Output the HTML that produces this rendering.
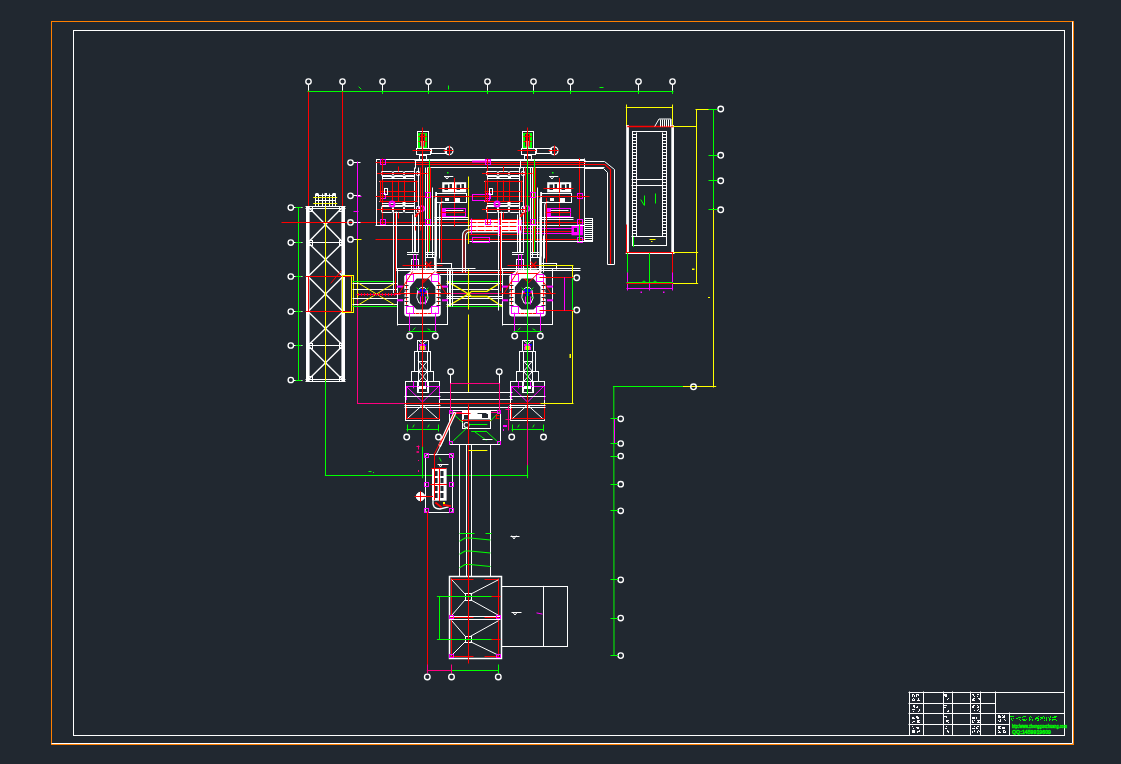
<!DOCTYPE html><html><head><meta charset="utf-8"><style>html,body{margin:0;padding:0;background:#212830;overflow:hidden}svg{display:block}</style></head><body>
<svg width="1121" height="764" viewBox="0 0 1121 764" stroke-linecap="square">
<rect width="1121" height="764" fill="#212830"/>
<defs><g id="unit">
<rect x="417.5" y="131.5" width="11" height="17" fill="none" stroke="#ffffff" stroke-width="1"/>
<rect x="418.5" y="133.5" width="8" height="14" fill="none" stroke="#00ff00" stroke-width="1"/>
<line x1="419.5" y1="134" x2="419.5" y2="147" stroke="#00ff00" stroke-width="1"/>
<line x1="425.5" y1="134" x2="425.5" y2="147" stroke="#00ff00" stroke-width="1"/>
<line x1="421.5" y1="134" x2="421.5" y2="146" stroke="#ff0000" stroke-width="1"/>
<line x1="424.5" y1="134" x2="424.5" y2="146" stroke="#ff0000" stroke-width="1"/>
<rect x="418" y="146.5" width="9" height="2" fill="#00ff00"/>
<line x1="419" y1="136.5" x2="426" y2="136.5" stroke="#ff0000" stroke-width="1"/>
<line x1="419" y1="141.5" x2="426" y2="141.5" stroke="#ff0000" stroke-width="1"/>
<rect x="421.5" y="141" width="2" height="7" fill="#ffffff"/>
<rect x="416.5" y="148.5" width="14" height="6" fill="none" stroke="#ffffff" stroke-width="1"/>
<line x1="413" y1="150.5" x2="432" y2="150.5" stroke="#ff0000" stroke-width="1"/>
<rect x="431.5" y="148.5" width="15" height="5" fill="none" stroke="#ffffff" stroke-width="1"/>
<circle cx="449" cy="150.7" r="3.9" fill="none" stroke="#ffffff" stroke-width="1.3"/>
<line x1="444" y1="150.5" x2="453" y2="150.5" stroke="#ff0000" stroke-width="1"/>
<line x1="449.5" y1="146" x2="449.5" y2="155" stroke="#ff0000" stroke-width="1"/>
<rect x="419.5" y="155.5" width="7" height="4" fill="none" stroke="#ffffff" stroke-width="1"/>
<line x1="415.5" y1="161" x2="415.5" y2="168.2" stroke="#ffffff" stroke-width="1"/>
<line x1="414.5" y1="168" x2="414.5" y2="252.5" stroke="#ffffff" stroke-width="1"/>
<line x1="418.5" y1="168" x2="418.5" y2="252.5" stroke="#ffffff" stroke-width="1"/>
<line x1="412.5" y1="215" x2="412.5" y2="252.5" stroke="#ffffff" stroke-width="1"/>
<line x1="415.5" y1="215" x2="415.5" y2="252.5" stroke="#ffffff" stroke-width="1"/>
<line x1="425.5" y1="168" x2="425.5" y2="257" stroke="#ffffff" stroke-width="1"/>
<line x1="427.5" y1="168" x2="427.5" y2="257" stroke="#ffffff" stroke-width="1"/>
<line x1="432.5" y1="188" x2="432.5" y2="256.5" stroke="#ffffff" stroke-width="1"/>
<rect x="435.2" y="192" width="1.8" height="64.5" fill="#ffffff"/>
<circle cx="421.7" cy="208.6" r="2.6" fill="none" stroke="#ff00ff" stroke-width="1.5"/>
<line x1="416" y1="216" x2="419" y2="212" stroke="#ff0000" stroke-width="2"/>
<line x1="439.5" y1="226" x2="439.5" y2="258" stroke="#ffffff" stroke-width="1"/>
<line x1="441.5" y1="227" x2="441.5" y2="262" stroke="#ff0000" stroke-width="1"/>
<line x1="415.5" y1="226" x2="415.5" y2="230" stroke="#ff0000" stroke-width="1"/>
<line x1="420.5" y1="168" x2="420.5" y2="230" stroke="#ff0000" stroke-width="1"/>
<line x1="429.5" y1="160" x2="429.5" y2="252" stroke="#00ff00" stroke-width="1"/>
<line x1="428.5" y1="168" x2="428.5" y2="252" stroke="#ff0000" stroke-width="1"/>
<line x1="430.5" y1="168" x2="430.5" y2="240" stroke="#ff0000" stroke-width="1"/>
<line x1="407.5" y1="252.5" x2="418" y2="252.5" stroke="#ffffff" stroke-width="1"/>
<line x1="407.5" y1="254.5" x2="418" y2="254.5" stroke="#ffffff" stroke-width="1"/>
<line x1="426" y1="252.5" x2="434" y2="252.5" stroke="#ffffff" stroke-width="1"/>
<line x1="426" y1="254.5" x2="434" y2="254.5" stroke="#ffffff" stroke-width="1"/>
<rect x="411.5" y="259.5" width="7" height="11" fill="none" stroke="#ffffff" stroke-width="1"/>
<line x1="413.5" y1="255" x2="413.5" y2="270" stroke="#ff00ff" stroke-width="1"/>
<line x1="416.5" y1="255" x2="416.5" y2="270" stroke="#ff00ff" stroke-width="1"/>
<rect x="425.5" y="257.5" width="9" height="13" fill="none" stroke="#ffffff" stroke-width="1"/>
<path d="M426,262 L431,268 M431,262 L426,268" fill="none" stroke="#ff0000" stroke-width="1.2"/>
<line x1="403" y1="265.5" x2="442" y2="265.5" stroke="#ff0000" stroke-width="1"/>
<line x1="437" y1="263.5" x2="451.6" y2="263.5" stroke="#ffffff" stroke-width="1"/>
<line x1="451.5" y1="263.7" x2="451.5" y2="269" stroke="#ffffff" stroke-width="1"/>
<line x1="396.6" y1="268.5" x2="475" y2="268.5" stroke="#ffffff" stroke-width="1"/>
<line x1="396.6" y1="270.5" x2="475" y2="270.5" stroke="#ffffff" stroke-width="1"/>
<line x1="393.5" y1="212" x2="393.5" y2="269" stroke="#ffffff" stroke-width="1"/>
<line x1="396.5" y1="212" x2="396.5" y2="269" stroke="#ffffff" stroke-width="1"/>
<line x1="395.5" y1="212" x2="395.5" y2="269" stroke="#ff0000" stroke-width="1"/>
<line x1="376" y1="225.5" x2="468" y2="225.5" stroke="#ffffff" stroke-width="1"/>
<rect x="425.5" y="192.5" width="5" height="5" fill="none" stroke="#ff00ff" stroke-width="1"/>
<rect x="425.5" y="219.5" width="5" height="5" fill="none" stroke="#ff00ff" stroke-width="1"/>
<rect x="380.5" y="159.5" width="5" height="5" fill="none" stroke="#ff00ff" stroke-width="1"/>
<rect x="380.5" y="193.5" width="5" height="5" fill="none" stroke="#ff00ff" stroke-width="1"/>
<rect x="380.5" y="219.5" width="5" height="5" fill="none" stroke="#ff00ff" stroke-width="1"/>
<line x1="382.5" y1="159" x2="382.5" y2="224" stroke="#ff0000" stroke-width="1"/>
<rect x="381.5" y="171.5" width="11" height="4" fill="none" stroke="#ffffff" stroke-width="1" rx="0.8"/>
<rect x="381.5" y="206.5" width="11" height="6" fill="none" stroke="#ffffff" stroke-width="1" rx="0.8"/>
<rect x="393.5" y="171.5" width="10" height="4" fill="none" stroke="#ffffff" stroke-width="1" rx="0.8"/>
<rect x="393.5" y="206.5" width="10" height="6" fill="none" stroke="#ffffff" stroke-width="1" rx="0.8"/>
<rect x="404.5" y="171.5" width="10" height="4" fill="none" stroke="#ffffff" stroke-width="1" rx="0.8"/>
<rect x="404.5" y="206.5" width="10" height="6" fill="none" stroke="#ffffff" stroke-width="1" rx="0.8"/>
<rect x="416.5" y="171.5" width="3" height="4" fill="none" stroke="#ffffff" stroke-width="1" rx="0.8"/>
<rect x="416.5" y="206.5" width="3" height="6" fill="none" stroke="#ffffff" stroke-width="1" rx="0.8"/>
<line x1="377.5" y1="173.5" x2="427" y2="173.5" stroke="#ff0000" stroke-width="1"/>
<line x1="377.5" y1="209.5" x2="420" y2="209.5" stroke="#ff0000" stroke-width="1"/>
<line x1="382.5" y1="176.5" x2="414" y2="176.5" stroke="#ffffff" stroke-width="1"/>
<line x1="382.5" y1="178.5" x2="414" y2="178.5" stroke="#ffffff" stroke-width="1"/>
<line x1="382.5" y1="176" x2="382.5" y2="179" stroke="#ffffff" stroke-width="1"/>
<line x1="414.5" y1="176" x2="414.5" y2="179" stroke="#ffffff" stroke-width="1"/>
<rect x="391.5" y="177" width="3" height="2" fill="#ffffff"/>
<rect x="403" y="177" width="3" height="2" fill="#ffffff"/>
<line x1="379.5" y1="181.5" x2="417" y2="181.5" stroke="#ffffff" stroke-width="1"/>
<line x1="379.5" y1="201.5" x2="417" y2="201.5" stroke="#ffffff" stroke-width="1"/>
<line x1="382.5" y1="203.5" x2="414" y2="203.5" stroke="#ffffff" stroke-width="1"/>
<line x1="382.5" y1="205.5" x2="414" y2="205.5" stroke="#ffffff" stroke-width="1"/>
<rect x="402.5" y="202" width="3" height="4" fill="#ffffff"/>
<line x1="380.5" y1="181" x2="380.5" y2="201" stroke="#ff0000" stroke-width="1"/>
<line x1="382.5" y1="181" x2="382.5" y2="201" stroke="#ff0000" stroke-width="1"/>
<line x1="392.5" y1="181" x2="392.5" y2="201" stroke="#ff0000" stroke-width="1"/>
<line x1="398.5" y1="181" x2="398.5" y2="201" stroke="#ff0000" stroke-width="1"/>
<line x1="404.5" y1="181" x2="404.5" y2="201" stroke="#ff0000" stroke-width="1"/>
<line x1="416.5" y1="181" x2="416.5" y2="201" stroke="#ff0000" stroke-width="1"/>
<line x1="398.5" y1="167" x2="398.5" y2="171" stroke="#ff0000" stroke-width="1"/>
<line x1="398.5" y1="213" x2="398.5" y2="218" stroke="#ff0000" stroke-width="1"/>
<line x1="380" y1="181.5" x2="417" y2="181.5" stroke="#ff0000" stroke-width="1"/>
<line x1="380" y1="191.5" x2="417" y2="191.5" stroke="#ff0000" stroke-width="1"/>
<line x1="380" y1="201.5" x2="417" y2="201.5" stroke="#ff0000" stroke-width="1"/>
<rect x="384.5" y="188.5" width="3" height="6" fill="none" stroke="#ffffff" stroke-width="1"/>
<circle cx="392" cy="204" r="2.5" fill="none" stroke="#ff00ff" stroke-width="2"/>
<rect x="442.2" y="182.2" width="24" height="10.1" fill="#ffffff"/>
<rect x="444.5" y="184.5" width="3.5" height="5.5" fill="#212830"/>
<rect x="449.5" y="184" width="2.5" height="5" fill="#212830"/>
<rect x="456.5" y="184.5" width="3.5" height="5.5" fill="#212830"/>
<rect x="461.5" y="184" width="2.5" height="5" fill="#212830"/>
<line x1="439" y1="188.5" x2="468" y2="188.5" stroke="#ff0000" stroke-width="1"/>
<line x1="454.5" y1="178.4" x2="454.5" y2="226.2" stroke="#ff0000" stroke-width="1"/>
<line x1="444.5" y1="176.5" x2="452.8" y2="176.5" stroke="#ffffff" stroke-width="1"/>
<path d="M445,176.5 L447,179 L449,176.5" fill="none" stroke="#ffffff" stroke-width="1"/>
<rect x="447" y="172" width="1.5" height="1.5" fill="#00ff00"/>
<rect x="436.5" y="193.5" width="30" height="9" fill="none" stroke="#ffffff" stroke-width="1"/>
<line x1="436" y1="196.5" x2="467" y2="196.5" stroke="#ff0000" stroke-width="1"/>
<rect x="445" y="198" width="4" height="3" fill="#ffffff"/>
<rect x="455" y="198" width="5" height="4" fill="#ffffff"/>
<rect x="441.5" y="208.5" width="24" height="8" fill="none" stroke="#ff00ff" stroke-width="1"/>
<rect x="441.5" y="209" width="4.5" height="7" fill="#ff00ff"/>
<line x1="441" y1="212.5" x2="465" y2="212.5" stroke="#ff0000" stroke-width="1"/>
<line x1="446" y1="210.5" x2="463" y2="210.5" stroke="#ffffff" stroke-width="1"/>
<line x1="435" y1="217.5" x2="468" y2="217.5" stroke="#ffffff" stroke-width="1"/>
<line x1="435" y1="219.5" x2="468" y2="219.5" stroke="#ffffff" stroke-width="1"/>
<rect x="434.5" y="198.4" width="2.2" height="73.6" fill="#ffffff"/>
<line x1="441.5" y1="198.4" x2="441.5" y2="250" stroke="#ff0000" stroke-width="1"/>
<path d="M439.6,226 L439.6,206 Q439.6,202 443,202" fill="none" stroke="#ffffff" stroke-width="1.1"/>
<rect x="397.5" y="268.5" width="50" height="56" fill="none" stroke="#ffffff" stroke-width="1"/>
<path d="M413,269.5 L432,269.5 L440.8,276 L440.8,313 Q440.8,316.5 437.3,316.5 L407.7,316.5 Q404.2,316.5 404.2,313 L404.2,276 Z M416.7,278.5 L428.5,278.5 L435.4,287 L435.4,303 L428.5,309.6 L416.7,309.6 L409.9,303 L409.9,287 Z" fill="#ffffff" fill-rule="evenodd" stroke="none" stroke-width="0"/>
<path d="M406.5,281 L406.5,308 M438.5,281 L438.5,308 M412,313.5 L433,313.5" fill="none" stroke="#ff0000" stroke-width="1" stroke-dasharray="2.5,1.5"/>
<path d="M413,273.5 L432,273.5" fill="none" stroke="#ff0000" stroke-width="1"/>
<path d="M404.8,290 L404.8,300 M440.2,290 L440.2,300" fill="none" stroke="#212830" stroke-width="1.2" stroke-dasharray="1.5,2"/>
<line x1="405" y1="285.5" x2="408" y2="285.5" stroke="#212830" stroke-width="1"/>
<line x1="437" y1="285.5" x2="440" y2="285.5" stroke="#212830" stroke-width="1"/>
<line x1="405" y1="289.5" x2="408" y2="289.5" stroke="#212830" stroke-width="1"/>
<line x1="437" y1="289.5" x2="440" y2="289.5" stroke="#212830" stroke-width="1"/>
<line x1="405" y1="293.5" x2="408" y2="293.5" stroke="#212830" stroke-width="1"/>
<line x1="437" y1="293.5" x2="440" y2="293.5" stroke="#212830" stroke-width="1"/>
<line x1="405" y1="297.5" x2="408" y2="297.5" stroke="#212830" stroke-width="1"/>
<line x1="437" y1="297.5" x2="440" y2="297.5" stroke="#212830" stroke-width="1"/>
<line x1="405" y1="301.5" x2="408" y2="301.5" stroke="#212830" stroke-width="1"/>
<line x1="437" y1="301.5" x2="440" y2="301.5" stroke="#212830" stroke-width="1"/>
<line x1="405" y1="305.5" x2="408" y2="305.5" stroke="#212830" stroke-width="1"/>
<line x1="437" y1="305.5" x2="440" y2="305.5" stroke="#212830" stroke-width="1"/>
<rect x="406.5" y="274.5" width="7" height="7" fill="none" stroke="#ff00ff" stroke-width="1"/>
<rect x="431.5" y="274.5" width="7" height="7" fill="none" stroke="#ff00ff" stroke-width="1"/>
<rect x="406.5" y="306.5" width="7" height="7" fill="none" stroke="#ff00ff" stroke-width="1"/>
<rect x="431.5" y="306.5" width="7" height="7" fill="none" stroke="#ff00ff" stroke-width="1"/>
<line x1="398" y1="286.6" x2="402" y2="286.6" stroke="#ff00ff" stroke-width="2"/>
<line x1="398" y1="300.3" x2="402" y2="300.3" stroke="#ff00ff" stroke-width="2"/>
<line x1="443" y1="286.6" x2="447" y2="286.6" stroke="#ff00ff" stroke-width="2"/>
<line x1="443" y1="300.3" x2="447" y2="300.3" stroke="#ff00ff" stroke-width="2"/>
<line x1="395" y1="293.5" x2="450" y2="293.5" stroke="#ff0000" stroke-width="1"/>
<line x1="398.7" y1="293.9" x2="412.4" y2="271.9" stroke="#ff0000" stroke-width="1"/>
<line x1="423.4" y1="282.9" x2="434.4" y2="271.9" stroke="#ff0000" stroke-width="1"/>
<line x1="439" y1="282.9" x2="446.3" y2="293.9" stroke="#ff0000" stroke-width="1"/>
<path d="M418,290 Q422.5,284 427,290 L428,298 L426,303 L419,303 L417,298 Z" fill="none" stroke="#ffffff" stroke-width="1"/>
<rect x="419.5" y="289" width="2.5" height="3" fill="#0000ff"/>
<rect x="423" y="289" width="2.5" height="3" fill="#0000ff"/>
<rect x="421" y="293" width="3" height="3" fill="#0000ff"/>
<rect x="418" y="291" width="1.5" height="2" fill="#ff00ff"/>
<rect x="425.5" y="291" width="1.5" height="2" fill="#ff00ff"/>
<rect x="422.3" y="287.5" width="1" height="1.5" fill="#ffff00"/>
<line x1="417" y1="288" x2="419" y2="290" stroke="#00ff00" stroke-width="1"/>
<line x1="428" y1="288" x2="426" y2="290" stroke="#00ff00" stroke-width="1"/>
<line x1="426" y1="297" x2="428" y2="298" stroke="#00ff00" stroke-width="1"/>
<line x1="420.5" y1="297" x2="420.5" y2="304" stroke="#ff00ff" stroke-width="1"/>
<line x1="422.5" y1="297" x2="422.5" y2="304" stroke="#ff00ff" stroke-width="1"/>
<line x1="425.5" y1="297" x2="425.5" y2="304" stroke="#ff00ff" stroke-width="1"/>
<line x1="409.5" y1="313" x2="409.5" y2="332" stroke="#ff00ff" stroke-width="1"/>
<line x1="435.5" y1="313" x2="435.5" y2="332" stroke="#ff00ff" stroke-width="1"/>
<line x1="409" y1="331.5" x2="436" y2="331.5" stroke="#00ff00" stroke-width="1"/>
<line x1="413" y1="330" x2="415" y2="328" stroke="#00ff00" stroke-width="1"/>
<line x1="428" y1="329" x2="430" y2="330" stroke="#00ff00" stroke-width="1"/>
<circle cx="409.7" cy="336" r="2.8" fill="none" stroke="#ffffff" stroke-width="1.35"/>
<circle cx="435.3" cy="336" r="2.8" fill="none" stroke="#ffffff" stroke-width="1.35"/>
<rect x="417.5" y="340.5" width="11" height="11" fill="none" stroke="#ffffff" stroke-width="1"/>
<path d="M419,341 L422.7,344 L426.5,341" fill="none" stroke="#ffffff" stroke-width="1"/>
<rect x="419" y="344" width="7" height="2" fill="#ff00ff"/>
<rect x="420" y="346" width="5" height="4" fill="#ffff00" opacity="0.9"/>
<rect x="419" y="346.5" width="1.5" height="3.5" fill="#ff00ff"/>
<rect x="424.5" y="346.5" width="1.5" height="3.5" fill="#ff00ff"/>
<rect x="425" y="344" width="2" height="1.5" fill="#0000ff"/>
<rect x="414.5" y="351.5" width="16" height="20" fill="none" stroke="#ffffff" stroke-width="1"/>
<line x1="418.5" y1="351.5" x2="418.5" y2="391.3" stroke="#ffffff" stroke-width="1"/>
<line x1="427.5" y1="351.5" x2="427.5" y2="391.3" stroke="#ffffff" stroke-width="1"/>
<line x1="418.5" y1="361.5" x2="427.5" y2="361.5" stroke="#ffffff" stroke-width="1"/>
<line x1="418.5" y1="361" x2="427.5" y2="371.4" stroke="#ffffff" stroke-width="1"/>
<line x1="427.5" y1="361" x2="418.5" y2="371.4" stroke="#ffffff" stroke-width="1"/>
<line x1="418.5" y1="371.4" x2="427.5" y2="381.7" stroke="#ffffff" stroke-width="1"/>
<line x1="427.5" y1="371.4" x2="418.5" y2="381.7" stroke="#ffffff" stroke-width="1"/>
<rect x="411.5" y="371.5" width="22" height="10" fill="none" stroke="#ffffff" stroke-width="1"/>
<rect x="405.5" y="381.5" width="34" height="39" fill="none" stroke="#ffffff" stroke-width="1"/>
<line x1="406.5" y1="386.5" x2="439" y2="386.5" stroke="#ff00ff" stroke-width="1"/>
<line x1="406.5" y1="386.5" x2="406.5" y2="399.6" stroke="#ff00ff" stroke-width="1"/>
<line x1="439.5" y1="386.5" x2="439.5" y2="399.6" stroke="#ff00ff" stroke-width="1"/>
<line x1="407" y1="387" x2="422.5" y2="402" stroke="#ff00ff" stroke-width="1"/>
<line x1="438" y1="387" x2="422.5" y2="402" stroke="#ff00ff" stroke-width="1"/>
<line x1="407" y1="418.5" x2="439" y2="418.5" stroke="#ff0000" stroke-width="1"/>
<line x1="406.5" y1="405" x2="406.5" y2="418.8" stroke="#ff0000" stroke-width="1"/>
<line x1="439.5" y1="405" x2="439.5" y2="418.8" stroke="#ff0000" stroke-width="1"/>
<line x1="408" y1="418" x2="422.5" y2="405" stroke="#ffffff" stroke-width="1"/>
<line x1="437" y1="418" x2="422.5" y2="405" stroke="#ffffff" stroke-width="1"/>
<line x1="413.5" y1="381.7" x2="413.5" y2="387.9" stroke="#ff00ff" stroke-width="1"/>
<line x1="428.5" y1="381.7" x2="428.5" y2="387.9" stroke="#ff00ff" stroke-width="1"/>
<line x1="417.5" y1="381.7" x2="417.5" y2="386" stroke="#ff00ff" stroke-width="1"/>
<line x1="425.5" y1="381.7" x2="425.5" y2="386" stroke="#ff00ff" stroke-width="1"/>
<rect x="417.5" y="381.5" width="11" height="11" fill="none" stroke="#ffffff" stroke-width="1"/>
<rect x="419" y="386" width="7" height="3" fill="#ffffff"/>
<line x1="405" y1="396.5" x2="440" y2="396.5" stroke="#ffffff" stroke-width="1"/>
<line x1="405" y1="405.5" x2="440" y2="405.5" stroke="#ffffff" stroke-width="1"/>
<line x1="405" y1="407.5" x2="440" y2="407.5" stroke="#ffffff" stroke-width="1"/>
<line x1="405" y1="403.5" x2="440" y2="403.5" stroke="#ff0000" stroke-width="1"/>
<line x1="407.5" y1="425" x2="407.5" y2="431" stroke="#00ff00" stroke-width="1"/>
<line x1="438.5" y1="425" x2="438.5" y2="431" stroke="#00ff00" stroke-width="1"/>
<line x1="407" y1="429.5" x2="438.5" y2="429.5" stroke="#00ff00" stroke-width="1"/>
<line x1="413" y1="427" x2="414" y2="425" stroke="#00ff00" stroke-width="1"/>
<line x1="428" y1="427" x2="429" y2="425" stroke="#00ff00" stroke-width="1"/>
<circle cx="406.7" cy="437" r="2.8" fill="none" stroke="#ffffff" stroke-width="1.35"/>
<circle cx="438.5" cy="437" r="2.8" fill="none" stroke="#ffffff" stroke-width="1.35"/>
</g><g id="ulow">
</g></defs>
<rect x="51.5" y="21.5" width="1022" height="723" fill="none" stroke="#ff7f00" stroke-width="1"/>
<line x1="1072.5" y1="22" x2="1072.5" y2="743" stroke="#ffffff" stroke-width="1"/>
<line x1="52" y1="743.5" x2="1072" y2="743.5" stroke="#ffffff" stroke-width="1"/>
<rect x="73.5" y="30.5" width="991" height="705" fill="none" stroke="#ffffff" stroke-width="1"/>
<line x1="909" y1="692.5" x2="1064.5" y2="692.5" stroke="#ffffff" stroke-width="1"/>
<line x1="909.5" y1="692" x2="909.5" y2="735" stroke="#ffffff" stroke-width="1"/>
<line x1="909" y1="703.5" x2="995.5" y2="703.5" stroke="#ffffff" stroke-width="1"/>
<line x1="909" y1="713.5" x2="1064.5" y2="713.5" stroke="#ffffff" stroke-width="1"/>
<line x1="909" y1="724.5" x2="1009.5" y2="724.5" stroke="#ffffff" stroke-width="1"/>
<line x1="923.5" y1="692" x2="923.5" y2="735" stroke="#ffffff" stroke-width="1"/>
<line x1="943.5" y1="692" x2="943.5" y2="735" stroke="#ffffff" stroke-width="1"/>
<line x1="952.5" y1="692" x2="952.5" y2="735" stroke="#ffffff" stroke-width="1"/>
<line x1="970.5" y1="692" x2="970.5" y2="735" stroke="#ffffff" stroke-width="1"/>
<line x1="980.5" y1="692" x2="980.5" y2="735" stroke="#ffffff" stroke-width="1"/>
<line x1="995.5" y1="692" x2="995.5" y2="735" stroke="#ffffff" stroke-width="1"/>
<line x1="1009.5" y1="713" x2="1009.5" y2="735" stroke="#ffffff" stroke-width="1"/>
<rect x="912" y="694" width="1" height="1" fill="#ffffff"/>
<rect x="913" y="694" width="1" height="1" fill="#ffffff"/>
<rect x="912" y="695" width="1" height="1" fill="#ffffff"/>
<rect x="914" y="695" width="1" height="1" fill="#ffffff"/>
<rect x="912" y="696" width="1" height="1" fill="#ffffff"/>
<rect x="914" y="696" width="1" height="1" fill="#ffffff"/>
<rect x="916" y="694" width="1" height="1" fill="#ffffff"/>
<rect x="917" y="694" width="1" height="1" fill="#ffffff"/>
<rect x="918" y="694" width="1" height="1" fill="#ffffff"/>
<rect x="916" y="695" width="1" height="1" fill="#ffffff"/>
<rect x="918" y="695" width="1" height="1" fill="#ffffff"/>
<rect x="916" y="696" width="1" height="1" fill="#ffffff"/>
<rect x="913" y="698" width="1" height="1" fill="#ffffff"/>
<rect x="912" y="699" width="1" height="1" fill="#ffffff"/>
<rect x="914" y="699" width="1" height="1" fill="#ffffff"/>
<rect x="912" y="700" width="1" height="1" fill="#ffffff"/>
<rect x="913" y="700" width="1" height="1" fill="#ffffff"/>
<rect x="914" y="700" width="1" height="1" fill="#ffffff"/>
<rect x="918" y="698" width="1" height="1" fill="#ffffff"/>
<rect x="918" y="699" width="1" height="1" fill="#ffffff"/>
<rect x="917" y="700" width="1" height="1" fill="#ffffff"/>
<rect x="918" y="700" width="1" height="1" fill="#ffffff"/>
<rect x="919" y="700" width="1" height="1" fill="#ffffff"/>
<rect x="913" y="705" width="1" height="1" fill="#ffffff"/>
<rect x="914" y="705" width="1" height="1" fill="#ffffff"/>
<rect x="913" y="706" width="1" height="1" fill="#ffffff"/>
<rect x="914" y="706" width="1" height="1" fill="#ffffff"/>
<rect x="914" y="707" width="1" height="1" fill="#ffffff"/>
<rect x="917" y="706" width="1" height="1" fill="#ffffff"/>
<rect x="916" y="707" width="1" height="1" fill="#ffffff"/>
<rect x="917" y="707" width="1" height="1" fill="#ffffff"/>
<rect x="912" y="709" width="1" height="1" fill="#ffffff"/>
<rect x="913" y="709" width="1" height="1" fill="#ffffff"/>
<rect x="914" y="709" width="1" height="1" fill="#ffffff"/>
<rect x="913" y="711" width="1" height="1" fill="#ffffff"/>
<rect x="919" y="709" width="1" height="1" fill="#ffffff"/>
<rect x="919" y="710" width="1" height="1" fill="#ffffff"/>
<rect x="918" y="711" width="1" height="1" fill="#ffffff"/>
<rect x="912" y="717" width="1" height="1" fill="#ffffff"/>
<rect x="913" y="717" width="1" height="1" fill="#ffffff"/>
<rect x="912" y="718" width="1" height="1" fill="#ffffff"/>
<rect x="913" y="718" width="1" height="1" fill="#ffffff"/>
<rect x="914" y="718" width="1" height="1" fill="#ffffff"/>
<rect x="916" y="716" width="1" height="1" fill="#ffffff"/>
<rect x="917" y="716" width="1" height="1" fill="#ffffff"/>
<rect x="916" y="717" width="1" height="1" fill="#ffffff"/>
<rect x="917" y="717" width="1" height="1" fill="#ffffff"/>
<rect x="918" y="717" width="1" height="1" fill="#ffffff"/>
<rect x="917" y="718" width="1" height="1" fill="#ffffff"/>
<rect x="918" y="718" width="1" height="1" fill="#ffffff"/>
<rect x="913" y="721" width="1" height="1" fill="#ffffff"/>
<rect x="914" y="721" width="1" height="1" fill="#ffffff"/>
<rect x="912" y="722" width="1" height="1" fill="#ffffff"/>
<rect x="917" y="720" width="1" height="1" fill="#ffffff"/>
<rect x="918" y="720" width="1" height="1" fill="#ffffff"/>
<rect x="919" y="720" width="1" height="1" fill="#ffffff"/>
<rect x="917" y="721" width="1" height="1" fill="#ffffff"/>
<rect x="918" y="721" width="1" height="1" fill="#ffffff"/>
<rect x="917" y="722" width="1" height="1" fill="#ffffff"/>
<rect x="918" y="722" width="1" height="1" fill="#ffffff"/>
<rect x="919" y="722" width="1" height="1" fill="#ffffff"/>
<rect x="912" y="726" width="1" height="1" fill="#ffffff"/>
<rect x="913" y="728" width="1" height="1" fill="#ffffff"/>
<rect x="916" y="727" width="1" height="1" fill="#ffffff"/>
<rect x="917" y="727" width="1" height="1" fill="#ffffff"/>
<rect x="918" y="727" width="1" height="1" fill="#ffffff"/>
<rect x="917" y="728" width="1" height="1" fill="#ffffff"/>
<rect x="918" y="728" width="1" height="1" fill="#ffffff"/>
<rect x="912" y="730" width="1" height="1" fill="#ffffff"/>
<rect x="913" y="730" width="1" height="1" fill="#ffffff"/>
<rect x="914" y="730" width="1" height="1" fill="#ffffff"/>
<rect x="912" y="731" width="1" height="1" fill="#ffffff"/>
<rect x="913" y="731" width="1" height="1" fill="#ffffff"/>
<rect x="914" y="731" width="1" height="1" fill="#ffffff"/>
<rect x="912" y="732" width="1" height="1" fill="#ffffff"/>
<rect x="913" y="732" width="1" height="1" fill="#ffffff"/>
<rect x="914" y="732" width="1" height="1" fill="#ffffff"/>
<rect x="919" y="730" width="1" height="1" fill="#ffffff"/>
<rect x="917" y="731" width="1" height="1" fill="#ffffff"/>
<rect x="918" y="731" width="1" height="1" fill="#ffffff"/>
<rect x="919" y="731" width="1" height="1" fill="#ffffff"/>
<rect x="917" y="732" width="1" height="1" fill="#ffffff"/>
<rect x="944" y="694" width="1" height="1" fill="#ffffff"/>
<rect x="945" y="694" width="1" height="1" fill="#ffffff"/>
<rect x="946" y="694" width="1" height="1" fill="#ffffff"/>
<rect x="944" y="695" width="1" height="1" fill="#ffffff"/>
<rect x="945" y="695" width="1" height="1" fill="#ffffff"/>
<rect x="946" y="695" width="1" height="1" fill="#ffffff"/>
<rect x="945" y="696" width="1" height="1" fill="#ffffff"/>
<rect x="946" y="696" width="1" height="1" fill="#ffffff"/>
<rect x="948" y="698" width="1" height="1" fill="#ffffff"/>
<rect x="947" y="699" width="1" height="1" fill="#ffffff"/>
<rect x="944" y="705" width="1" height="1" fill="#ffffff"/>
<rect x="945" y="705" width="1" height="1" fill="#ffffff"/>
<rect x="946" y="705" width="1" height="1" fill="#ffffff"/>
<rect x="944" y="707" width="1" height="1" fill="#ffffff"/>
<rect x="945" y="707" width="1" height="1" fill="#ffffff"/>
<rect x="948" y="710" width="1" height="1" fill="#ffffff"/>
<rect x="947" y="711" width="1" height="1" fill="#ffffff"/>
<rect x="948" y="711" width="1" height="1" fill="#ffffff"/>
<rect x="944" y="716" width="1" height="1" fill="#ffffff"/>
<rect x="945" y="716" width="1" height="1" fill="#ffffff"/>
<rect x="946" y="716" width="1" height="1" fill="#ffffff"/>
<rect x="946" y="717" width="1" height="1" fill="#ffffff"/>
<rect x="946" y="720" width="1" height="1" fill="#ffffff"/>
<rect x="947" y="720" width="1" height="1" fill="#ffffff"/>
<rect x="948" y="720" width="1" height="1" fill="#ffffff"/>
<rect x="946" y="721" width="1" height="1" fill="#ffffff"/>
<rect x="947" y="721" width="1" height="1" fill="#ffffff"/>
<rect x="948" y="722" width="1" height="1" fill="#ffffff"/>
<rect x="946" y="726" width="1" height="1" fill="#ffffff"/>
<rect x="945" y="728" width="1" height="1" fill="#ffffff"/>
<rect x="946" y="728" width="1" height="1" fill="#ffffff"/>
<rect x="947" y="730" width="1" height="1" fill="#ffffff"/>
<rect x="947" y="731" width="1" height="1" fill="#ffffff"/>
<rect x="948" y="731" width="1" height="1" fill="#ffffff"/>
<rect x="948" y="732" width="1" height="1" fill="#ffffff"/>
<rect x="972" y="694" width="1" height="1" fill="#ffffff"/>
<rect x="973" y="694" width="1" height="1" fill="#ffffff"/>
<rect x="973" y="695" width="1" height="1" fill="#ffffff"/>
<rect x="974" y="696" width="1" height="1" fill="#ffffff"/>
<rect x="977" y="694" width="1" height="1" fill="#ffffff"/>
<rect x="978" y="694" width="1" height="1" fill="#ffffff"/>
<rect x="977" y="696" width="1" height="1" fill="#ffffff"/>
<rect x="973" y="698" width="1" height="1" fill="#ffffff"/>
<rect x="974" y="698" width="1" height="1" fill="#ffffff"/>
<rect x="972" y="699" width="1" height="1" fill="#ffffff"/>
<rect x="973" y="699" width="1" height="1" fill="#ffffff"/>
<rect x="972" y="700" width="1" height="1" fill="#ffffff"/>
<rect x="973" y="700" width="1" height="1" fill="#ffffff"/>
<rect x="974" y="700" width="1" height="1" fill="#ffffff"/>
<rect x="978" y="698" width="1" height="1" fill="#ffffff"/>
<rect x="979" y="698" width="1" height="1" fill="#ffffff"/>
<rect x="979" y="699" width="1" height="1" fill="#ffffff"/>
<rect x="973" y="705" width="1" height="1" fill="#ffffff"/>
<rect x="974" y="705" width="1" height="1" fill="#ffffff"/>
<rect x="972" y="706" width="1" height="1" fill="#ffffff"/>
<rect x="973" y="706" width="1" height="1" fill="#ffffff"/>
<rect x="972" y="707" width="1" height="1" fill="#ffffff"/>
<rect x="973" y="707" width="1" height="1" fill="#ffffff"/>
<rect x="977" y="705" width="1" height="1" fill="#ffffff"/>
<rect x="978" y="706" width="1" height="1" fill="#ffffff"/>
<rect x="977" y="707" width="1" height="1" fill="#ffffff"/>
<rect x="978" y="707" width="1" height="1" fill="#ffffff"/>
<rect x="974" y="710" width="1" height="1" fill="#ffffff"/>
<rect x="978" y="709" width="1" height="1" fill="#ffffff"/>
<rect x="977" y="710" width="1" height="1" fill="#ffffff"/>
<rect x="979" y="711" width="1" height="1" fill="#ffffff"/>
<rect x="972" y="717" width="1" height="1" fill="#ffffff"/>
<rect x="973" y="717" width="1" height="1" fill="#ffffff"/>
<rect x="974" y="717" width="1" height="1" fill="#ffffff"/>
<rect x="972" y="718" width="1" height="1" fill="#ffffff"/>
<rect x="973" y="718" width="1" height="1" fill="#ffffff"/>
<rect x="974" y="718" width="1" height="1" fill="#ffffff"/>
<rect x="976" y="717" width="1" height="1" fill="#ffffff"/>
<rect x="976" y="718" width="1" height="1" fill="#ffffff"/>
<rect x="972" y="720" width="1" height="1" fill="#ffffff"/>
<rect x="974" y="720" width="1" height="1" fill="#ffffff"/>
<rect x="972" y="721" width="1" height="1" fill="#ffffff"/>
<rect x="972" y="722" width="1" height="1" fill="#ffffff"/>
<rect x="973" y="722" width="1" height="1" fill="#ffffff"/>
<rect x="977" y="720" width="1" height="1" fill="#ffffff"/>
<rect x="978" y="720" width="1" height="1" fill="#ffffff"/>
<rect x="979" y="720" width="1" height="1" fill="#ffffff"/>
<rect x="978" y="721" width="1" height="1" fill="#ffffff"/>
<rect x="977" y="722" width="1" height="1" fill="#ffffff"/>
<rect x="978" y="722" width="1" height="1" fill="#ffffff"/>
<rect x="979" y="722" width="1" height="1" fill="#ffffff"/>
<rect x="974" y="726" width="1" height="1" fill="#ffffff"/>
<rect x="972" y="728" width="1" height="1" fill="#ffffff"/>
<rect x="973" y="728" width="1" height="1" fill="#ffffff"/>
<rect x="974" y="728" width="1" height="1" fill="#ffffff"/>
<rect x="977" y="726" width="1" height="1" fill="#ffffff"/>
<rect x="978" y="726" width="1" height="1" fill="#ffffff"/>
<rect x="976" y="727" width="1" height="1" fill="#ffffff"/>
<rect x="976" y="728" width="1" height="1" fill="#ffffff"/>
<rect x="977" y="728" width="1" height="1" fill="#ffffff"/>
<rect x="974" y="730" width="1" height="1" fill="#ffffff"/>
<rect x="972" y="731" width="1" height="1" fill="#ffffff"/>
<rect x="974" y="731" width="1" height="1" fill="#ffffff"/>
<rect x="972" y="732" width="1" height="1" fill="#ffffff"/>
<rect x="978" y="730" width="1" height="1" fill="#ffffff"/>
<rect x="977" y="731" width="1" height="1" fill="#ffffff"/>
<rect x="979" y="731" width="1" height="1" fill="#ffffff"/>
<rect x="977" y="732" width="1" height="1" fill="#ffffff"/>
<rect x="998" y="715" width="1" height="1" fill="#ffffff"/>
<rect x="999" y="715" width="1" height="1" fill="#ffffff"/>
<rect x="998" y="716" width="1" height="1" fill="#ffffff"/>
<rect x="999" y="716" width="1" height="1" fill="#ffffff"/>
<rect x="1000" y="716" width="1" height="1" fill="#ffffff"/>
<rect x="998" y="717" width="1" height="1" fill="#ffffff"/>
<rect x="999" y="717" width="1" height="1" fill="#ffffff"/>
<rect x="1000" y="717" width="1" height="1" fill="#ffffff"/>
<rect x="1002" y="715" width="1" height="1" fill="#ffffff"/>
<rect x="1004" y="715" width="1" height="1" fill="#ffffff"/>
<rect x="1003" y="716" width="1" height="1" fill="#ffffff"/>
<rect x="1004" y="716" width="1" height="1" fill="#ffffff"/>
<rect x="1002" y="717" width="1" height="1" fill="#ffffff"/>
<rect x="1003" y="717" width="1" height="1" fill="#ffffff"/>
<rect x="1004" y="717" width="1" height="1" fill="#ffffff"/>
<rect x="1000" y="719" width="1" height="1" fill="#ffffff"/>
<rect x="998" y="720" width="1" height="1" fill="#ffffff"/>
<rect x="1000" y="720" width="1" height="1" fill="#ffffff"/>
<rect x="999" y="721" width="1" height="1" fill="#ffffff"/>
<rect x="1000" y="721" width="1" height="1" fill="#ffffff"/>
<rect x="1004" y="719" width="1" height="1" fill="#ffffff"/>
<rect x="1005" y="720" width="1" height="1" fill="#ffffff"/>
<rect x="998" y="726" width="1" height="1" fill="#ffffff"/>
<rect x="999" y="726" width="1" height="1" fill="#ffffff"/>
<rect x="1000" y="726" width="1" height="1" fill="#ffffff"/>
<rect x="998" y="727" width="1" height="1" fill="#ffffff"/>
<rect x="999" y="727" width="1" height="1" fill="#ffffff"/>
<rect x="998" y="728" width="1" height="1" fill="#ffffff"/>
<rect x="999" y="728" width="1" height="1" fill="#ffffff"/>
<rect x="1000" y="728" width="1" height="1" fill="#ffffff"/>
<rect x="1002" y="727" width="1" height="1" fill="#ffffff"/>
<rect x="1003" y="727" width="1" height="1" fill="#ffffff"/>
<rect x="1004" y="727" width="1" height="1" fill="#ffffff"/>
<rect x="1002" y="728" width="1" height="1" fill="#ffffff"/>
<rect x="1003" y="728" width="1" height="1" fill="#ffffff"/>
<rect x="1004" y="728" width="1" height="1" fill="#ffffff"/>
<rect x="998" y="730" width="1" height="1" fill="#ffffff"/>
<rect x="999" y="731" width="1" height="1" fill="#ffffff"/>
<rect x="998" y="732" width="1" height="1" fill="#ffffff"/>
<rect x="999" y="732" width="1" height="1" fill="#ffffff"/>
<rect x="1000" y="732" width="1" height="1" fill="#ffffff"/>
<rect x="1003" y="730" width="1" height="1" fill="#ffffff"/>
<rect x="1004" y="730" width="1" height="1" fill="#ffffff"/>
<rect x="1003" y="731" width="1" height="1" fill="#ffffff"/>
<rect x="1005" y="731" width="1" height="1" fill="#ffffff"/>
<rect x="1003" y="732" width="1" height="1" fill="#ffffff"/>
<rect x="1004" y="732" width="1" height="1" fill="#ffffff"/>
<rect x="1005" y="732" width="1" height="1" fill="#ffffff"/>
<rect x="1010" y="716" width="1" height="1" fill="#00ff00"/>
<rect x="1011" y="716" width="1" height="1" fill="#00ff00"/>
<rect x="1012" y="716" width="1" height="1" fill="#00ff00"/>
<rect x="1013" y="716" width="1" height="1" fill="#00ff00"/>
<rect x="1011" y="718" width="1" height="1" fill="#00ff00"/>
<rect x="1013" y="718" width="1" height="1" fill="#00ff00"/>
<rect x="1011" y="719" width="1" height="1" fill="#00ff00"/>
<rect x="1012" y="720" width="1" height="1" fill="#00ff00"/>
<rect x="1018" y="717" width="1" height="1" fill="#00ff00"/>
<rect x="1019" y="717" width="1" height="1" fill="#00ff00"/>
<rect x="1020" y="717" width="1" height="1" fill="#00ff00"/>
<rect x="1016" y="718" width="1" height="1" fill="#00ff00"/>
<rect x="1017" y="718" width="1" height="1" fill="#00ff00"/>
<rect x="1019" y="719" width="1" height="1" fill="#00ff00"/>
<rect x="1020" y="720" width="1" height="1" fill="#00ff00"/>
<rect x="1023" y="716" width="1" height="1" fill="#00ff00"/>
<rect x="1024" y="716" width="1" height="1" fill="#00ff00"/>
<rect x="1025" y="716" width="1" height="1" fill="#00ff00"/>
<rect x="1022" y="717" width="1" height="1" fill="#00ff00"/>
<rect x="1022" y="719" width="1" height="1" fill="#00ff00"/>
<rect x="1023" y="719" width="1" height="1" fill="#00ff00"/>
<rect x="1024" y="719" width="1" height="1" fill="#00ff00"/>
<rect x="1026" y="719" width="1" height="1" fill="#00ff00"/>
<rect x="1023" y="720" width="1" height="1" fill="#00ff00"/>
<rect x="1024" y="720" width="1" height="1" fill="#00ff00"/>
<rect x="1025" y="720" width="1" height="1" fill="#00ff00"/>
<rect x="1030" y="716" width="1" height="1" fill="#00ff00"/>
<rect x="1029" y="717" width="1" height="1" fill="#00ff00"/>
<rect x="1031" y="717" width="1" height="1" fill="#00ff00"/>
<rect x="1029" y="718" width="1" height="1" fill="#00ff00"/>
<rect x="1029" y="719" width="1" height="1" fill="#00ff00"/>
<rect x="1030" y="719" width="1" height="1" fill="#00ff00"/>
<rect x="1032" y="719" width="1" height="1" fill="#00ff00"/>
<rect x="1029" y="720" width="1" height="1" fill="#00ff00"/>
<rect x="1032" y="720" width="1" height="1" fill="#00ff00"/>
<rect x="1038" y="716" width="1" height="1" fill="#00ff00"/>
<rect x="1036" y="717" width="1" height="1" fill="#00ff00"/>
<rect x="1037" y="717" width="1" height="1" fill="#00ff00"/>
<rect x="1035" y="718" width="1" height="1" fill="#00ff00"/>
<rect x="1036" y="718" width="1" height="1" fill="#00ff00"/>
<rect x="1037" y="718" width="1" height="1" fill="#00ff00"/>
<rect x="1038" y="718" width="1" height="1" fill="#00ff00"/>
<rect x="1035" y="719" width="1" height="1" fill="#00ff00"/>
<rect x="1038" y="719" width="1" height="1" fill="#00ff00"/>
<rect x="1037" y="720" width="1" height="1" fill="#00ff00"/>
<rect x="1038" y="720" width="1" height="1" fill="#00ff00"/>
<rect x="1043" y="716" width="1" height="1" fill="#00ff00"/>
<rect x="1040" y="717" width="1" height="1" fill="#00ff00"/>
<rect x="1041" y="717" width="1" height="1" fill="#00ff00"/>
<rect x="1042" y="717" width="1" height="1" fill="#00ff00"/>
<rect x="1044" y="717" width="1" height="1" fill="#00ff00"/>
<rect x="1041" y="718" width="1" height="1" fill="#00ff00"/>
<rect x="1042" y="718" width="1" height="1" fill="#00ff00"/>
<rect x="1044" y="718" width="1" height="1" fill="#00ff00"/>
<rect x="1040" y="719" width="1" height="1" fill="#00ff00"/>
<rect x="1044" y="720" width="1" height="1" fill="#00ff00"/>
<rect x="1050" y="716" width="1" height="1" fill="#00ff00"/>
<rect x="1046" y="717" width="1" height="1" fill="#00ff00"/>
<rect x="1048" y="717" width="1" height="1" fill="#00ff00"/>
<rect x="1050" y="717" width="1" height="1" fill="#00ff00"/>
<rect x="1046" y="718" width="1" height="1" fill="#00ff00"/>
<rect x="1049" y="718" width="1" height="1" fill="#00ff00"/>
<rect x="1046" y="719" width="1" height="1" fill="#00ff00"/>
<rect x="1049" y="719" width="1" height="1" fill="#00ff00"/>
<rect x="1050" y="719" width="1" height="1" fill="#00ff00"/>
<rect x="1046" y="720" width="1" height="1" fill="#00ff00"/>
<rect x="1049" y="720" width="1" height="1" fill="#00ff00"/>
<rect x="1054" y="716" width="1" height="1" fill="#00ff00"/>
<rect x="1055" y="716" width="1" height="1" fill="#00ff00"/>
<rect x="1056" y="716" width="1" height="1" fill="#00ff00"/>
<rect x="1052" y="717" width="1" height="1" fill="#00ff00"/>
<rect x="1053" y="717" width="1" height="1" fill="#00ff00"/>
<rect x="1054" y="717" width="1" height="1" fill="#00ff00"/>
<rect x="1055" y="717" width="1" height="1" fill="#00ff00"/>
<rect x="1052" y="719" width="1" height="1" fill="#00ff00"/>
<rect x="1053" y="719" width="1" height="1" fill="#00ff00"/>
<rect x="1054" y="719" width="1" height="1" fill="#00ff00"/>
<rect x="1055" y="719" width="1" height="1" fill="#00ff00"/>
<rect x="1052" y="720" width="1" height="1" fill="#00ff00"/>
<rect x="1056" y="720" width="1" height="1" fill="#00ff00"/>
<text x="1012" y="728.4" font-family="Liberation Sans" font-size="5.6" font-weight="bold" fill="#00ff00" stroke="#00ff00" stroke-width="0.35" textLength="55" lengthAdjust="spacingAndGlyphs">htp:/www.zhongguozhuang.com</text>
<text x="1012" y="734" font-family="Liberation Sans" font-size="5.6" font-weight="bold" fill="#00ff00" stroke="#00ff00" stroke-width="0.35" textLength="39" lengthAdjust="spacingAndGlyphs">QQ:1459919609</text>
<line x1="308" y1="91.5" x2="673" y2="91.5" stroke="#00ff00" stroke-width="1"/>
<circle cx="308.5" cy="81.5" r="2.7" fill="none" stroke="#ffffff" stroke-width="1.35"/>
<line x1="308.5" y1="85" x2="308.5" y2="92" stroke="#ffffff" stroke-width="1"/>
<line x1="308.5" y1="91" x2="308.5" y2="93.5" stroke="#00ff00" stroke-width="1"/>
<circle cx="342.5" cy="81.5" r="2.7" fill="none" stroke="#ffffff" stroke-width="1.35"/>
<line x1="342.5" y1="85" x2="342.5" y2="92" stroke="#ffffff" stroke-width="1"/>
<line x1="342.5" y1="91" x2="342.5" y2="93.5" stroke="#00ff00" stroke-width="1"/>
<circle cx="382.5" cy="81.5" r="2.7" fill="none" stroke="#ffffff" stroke-width="1.35"/>
<line x1="382.5" y1="85" x2="382.5" y2="92" stroke="#ffffff" stroke-width="1"/>
<line x1="382.5" y1="91" x2="382.5" y2="93.5" stroke="#00ff00" stroke-width="1"/>
<circle cx="428.5" cy="81.5" r="2.7" fill="none" stroke="#ffffff" stroke-width="1.35"/>
<line x1="428.5" y1="85" x2="428.5" y2="92" stroke="#ffffff" stroke-width="1"/>
<line x1="428.5" y1="91" x2="428.5" y2="93.5" stroke="#00ff00" stroke-width="1"/>
<circle cx="487.5" cy="81.5" r="2.7" fill="none" stroke="#ffffff" stroke-width="1.35"/>
<line x1="487.5" y1="85" x2="487.5" y2="92" stroke="#ffffff" stroke-width="1"/>
<line x1="487.5" y1="91" x2="487.5" y2="93.5" stroke="#00ff00" stroke-width="1"/>
<circle cx="533.5" cy="81.5" r="2.7" fill="none" stroke="#ffffff" stroke-width="1.35"/>
<line x1="533.5" y1="85" x2="533.5" y2="92" stroke="#ffffff" stroke-width="1"/>
<line x1="533.5" y1="91" x2="533.5" y2="93.5" stroke="#00ff00" stroke-width="1"/>
<circle cx="570.5" cy="81.5" r="2.7" fill="none" stroke="#ffffff" stroke-width="1.35"/>
<line x1="570.5" y1="85" x2="570.5" y2="92" stroke="#ffffff" stroke-width="1"/>
<line x1="570.5" y1="91" x2="570.5" y2="93.5" stroke="#00ff00" stroke-width="1"/>
<circle cx="638.5" cy="81.5" r="2.7" fill="none" stroke="#ffffff" stroke-width="1.35"/>
<line x1="638.5" y1="85" x2="638.5" y2="92" stroke="#ffffff" stroke-width="1"/>
<line x1="638.5" y1="91" x2="638.5" y2="93.5" stroke="#00ff00" stroke-width="1"/>
<circle cx="672.5" cy="81.5" r="2.7" fill="none" stroke="#ffffff" stroke-width="1.35"/>
<line x1="672.5" y1="85" x2="672.5" y2="92" stroke="#ffffff" stroke-width="1"/>
<line x1="672.5" y1="91" x2="672.5" y2="93.5" stroke="#00ff00" stroke-width="1"/>
<line x1="359" y1="87" x2="361" y2="89" stroke="#00ff00" stroke-width="1"/>
<line x1="448.5" y1="86" x2="448.5" y2="89" stroke="#00ff00" stroke-width="1"/>
<line x1="600" y1="87.5" x2="603" y2="87.5" stroke="#00ff00" stroke-width="1"/>
<line x1="308.5" y1="92" x2="308.5" y2="207" stroke="#ff0000" stroke-width="1"/>
<line x1="342.5" y1="92" x2="342.5" y2="207" stroke="#ff0000" stroke-width="1"/>
<line x1="298.5" y1="208" x2="298.5" y2="380" stroke="#00ff00" stroke-width="1"/>
<circle cx="290.8" cy="207.5" r="2.7" fill="none" stroke="#ffffff" stroke-width="1.35"/>
<line x1="294" y1="207.5" x2="302" y2="207.5" stroke="#ffffff" stroke-width="1"/>
<line x1="296" y1="207.5" x2="301" y2="207.5" stroke="#00ff00" stroke-width="1"/>
<circle cx="290.8" cy="242.5" r="2.7" fill="none" stroke="#ffffff" stroke-width="1.35"/>
<line x1="294" y1="242.5" x2="302" y2="242.5" stroke="#ffffff" stroke-width="1"/>
<line x1="296" y1="242.5" x2="301" y2="242.5" stroke="#00ff00" stroke-width="1"/>
<circle cx="290.8" cy="276.5" r="2.7" fill="none" stroke="#ffffff" stroke-width="1.35"/>
<line x1="294" y1="276.5" x2="302" y2="276.5" stroke="#ffffff" stroke-width="1"/>
<line x1="296" y1="276.5" x2="301" y2="276.5" stroke="#00ff00" stroke-width="1"/>
<circle cx="290.8" cy="311.5" r="2.7" fill="none" stroke="#ffffff" stroke-width="1.35"/>
<line x1="294" y1="311.5" x2="302" y2="311.5" stroke="#ffffff" stroke-width="1"/>
<line x1="296" y1="311.5" x2="301" y2="311.5" stroke="#00ff00" stroke-width="1"/>
<circle cx="290.8" cy="345.5" r="2.7" fill="none" stroke="#ffffff" stroke-width="1.35"/>
<line x1="294" y1="345.5" x2="302" y2="345.5" stroke="#ffffff" stroke-width="1"/>
<line x1="296" y1="345.5" x2="301" y2="345.5" stroke="#00ff00" stroke-width="1"/>
<circle cx="290.8" cy="380" r="2.7" fill="none" stroke="#ffffff" stroke-width="1.35"/>
<line x1="294" y1="380.5" x2="302" y2="380.5" stroke="#ffffff" stroke-width="1"/>
<line x1="296" y1="380.5" x2="301" y2="380.5" stroke="#00ff00" stroke-width="1"/>
<rect x="306" y="206" width="3.6" height="175.5" fill="#ffffff"/>
<rect x="341.4" y="206" width="3.6" height="175.5" fill="#ffffff"/>
<line x1="306" y1="206.5" x2="345" y2="206.5" stroke="#ffffff" stroke-width="1"/>
<line x1="306" y1="208.5" x2="345" y2="208.5" stroke="#ffffff" stroke-width="1"/>
<line x1="306" y1="379.5" x2="345" y2="379.5" stroke="#ffffff" stroke-width="1"/>
<line x1="306" y1="381.5" x2="345" y2="381.5" stroke="#ffffff" stroke-width="1"/>
<line x1="308" y1="242.5" x2="343" y2="242.5" stroke="#ffffff" stroke-width="1"/>
<line x1="308" y1="276.5" x2="343" y2="276.5" stroke="#ffffff" stroke-width="1"/>
<line x1="308" y1="311.5" x2="343" y2="311.5" stroke="#ffffff" stroke-width="1"/>
<line x1="308" y1="345.5" x2="343" y2="345.5" stroke="#ffffff" stroke-width="1"/>
<line x1="309.5" y1="208.3" x2="341.5" y2="241" stroke="#ffffff" stroke-width="1.4"/>
<line x1="341.5" y1="208.3" x2="309.5" y2="241" stroke="#ffffff" stroke-width="1.4"/>
<line x1="309.5" y1="244" x2="341.5" y2="275" stroke="#ffffff" stroke-width="1.4"/>
<line x1="341.5" y1="244" x2="309.5" y2="275" stroke="#ffffff" stroke-width="1.4"/>
<line x1="309.5" y1="278" x2="341.5" y2="310" stroke="#ffffff" stroke-width="1.4"/>
<line x1="341.5" y1="278" x2="309.5" y2="310" stroke="#ffffff" stroke-width="1.4"/>
<line x1="309.5" y1="313" x2="341.5" y2="344" stroke="#ffffff" stroke-width="1.4"/>
<line x1="341.5" y1="313" x2="309.5" y2="344" stroke="#ffffff" stroke-width="1.4"/>
<line x1="309.5" y1="347" x2="341.5" y2="378.5" stroke="#ffffff" stroke-width="1.4"/>
<line x1="341.5" y1="347" x2="309.5" y2="378.5" stroke="#ffffff" stroke-width="1.4"/>
<line x1="325.5" y1="206" x2="325.5" y2="381" stroke="#ffff00" stroke-width="1"/>
<line x1="325.5" y1="381" x2="325.5" y2="475" stroke="#00ff00" stroke-width="1"/>
<line x1="306" y1="276.5" x2="345" y2="276.5" stroke="#ff0000" stroke-width="1"/>
<line x1="306" y1="311.5" x2="345" y2="311.5" stroke="#ff0000" stroke-width="1"/>
<line x1="308.5" y1="277" x2="308.5" y2="311" stroke="#ff0000" stroke-width="1"/>
<line x1="342.5" y1="277" x2="342.5" y2="311" stroke="#ff0000" stroke-width="1"/>
<line x1="331" y1="283" x2="341" y2="271" stroke="#ff0000" stroke-width="1"/>
<line x1="315.5" y1="195.5" x2="335.5" y2="195.5" stroke="#ffffff" stroke-width="1"/>
<line x1="315.5" y1="194" x2="315.5" y2="206" stroke="#ffffff" stroke-width="1"/>
<line x1="318.5" y1="194" x2="318.5" y2="206" stroke="#ffffff" stroke-width="1"/>
<line x1="322.5" y1="194" x2="322.5" y2="206" stroke="#ffffff" stroke-width="1"/>
<line x1="325.5" y1="194" x2="325.5" y2="206" stroke="#ffffff" stroke-width="1"/>
<line x1="329.5" y1="194" x2="329.5" y2="206" stroke="#ffffff" stroke-width="1"/>
<line x1="332.5" y1="194" x2="332.5" y2="206" stroke="#ffffff" stroke-width="1"/>
<line x1="335.5" y1="194" x2="335.5" y2="206" stroke="#ffffff" stroke-width="1"/>
<rect x="316" y="193" width="2" height="2" fill="#ffffff"/>
<rect x="324.5" y="193" width="2.5" height="2" fill="#ffffff"/>
<rect x="333" y="193" width="2.5" height="2" fill="#ffffff"/>
<line x1="316" y1="200.5" x2="335" y2="200.5" stroke="#ffffff" stroke-width="1"/>
<line x1="316" y1="203.5" x2="335" y2="203.5" stroke="#ffffff" stroke-width="1"/>
<line x1="313.7" y1="197.5" x2="336.7" y2="197.5" stroke="#ffff00" stroke-width="1" stroke-dasharray="3,1.5"/>
<line x1="313.7" y1="203.5" x2="336.7" y2="203.5" stroke="#ffff00" stroke-width="1" stroke-dasharray="8,2"/>
<rect x="306.5" y="206.5" width="6" height="5" fill="none" stroke="#ffffff" stroke-width="1"/>
<rect x="339.5" y="206.5" width="5" height="5" fill="none" stroke="#ffffff" stroke-width="1"/>
<rect x="306.5" y="240.5" width="6" height="5" fill="none" stroke="#ffffff" stroke-width="1"/>
<rect x="339.5" y="240.5" width="5" height="5" fill="none" stroke="#ffffff" stroke-width="1"/>
<rect x="306.5" y="343.5" width="6" height="5" fill="none" stroke="#ffffff" stroke-width="1"/>
<rect x="339.5" y="343.5" width="5" height="5" fill="none" stroke="#ffffff" stroke-width="1"/>
<rect x="306.5" y="376.5" width="6" height="5" fill="none" stroke="#ffffff" stroke-width="1"/>
<rect x="339.5" y="376.5" width="5" height="5" fill="none" stroke="#ffffff" stroke-width="1"/>
<line x1="282" y1="222.5" x2="585" y2="222.5" stroke="#ff0000" stroke-width="1"/>
<line x1="376" y1="239.5" x2="585" y2="239.5" stroke="#ff0000" stroke-width="1"/>
<circle cx="350.5" cy="162.5" r="2.7" fill="none" stroke="#ffffff" stroke-width="1.35"/>
<line x1="353.7" y1="162.5" x2="360" y2="162.5" stroke="#ffffff" stroke-width="1"/>
<circle cx="350.5" cy="195.8" r="2.7" fill="none" stroke="#ffffff" stroke-width="1.35"/>
<line x1="353.7" y1="195.5" x2="360" y2="195.5" stroke="#ffffff" stroke-width="1"/>
<circle cx="350.5" cy="222.4" r="2.7" fill="none" stroke="#ffffff" stroke-width="1.35"/>
<line x1="353.7" y1="222.5" x2="360" y2="222.5" stroke="#ffffff" stroke-width="1"/>
<circle cx="350.5" cy="239.4" r="2.7" fill="none" stroke="#ffffff" stroke-width="1.35"/>
<line x1="353.7" y1="239.5" x2="360" y2="239.5" stroke="#ffffff" stroke-width="1"/>
<line x1="357.5" y1="162" x2="357.5" y2="239.5" stroke="#ff00ff" stroke-width="1"/>
<line x1="357.5" y1="239.5" x2="357.5" y2="300" stroke="#ffff00" stroke-width="1"/>
<line x1="357.5" y1="300" x2="357.5" y2="403.5" stroke="#ff0080" stroke-width="1"/>
<line x1="357.5" y1="403.5" x2="500" y2="403.5" stroke="#ff0080" stroke-width="1"/>
<line x1="354" y1="211.5" x2="358" y2="211.5" stroke="#ff00ff" stroke-width="1"/>
<line x1="357" y1="196.5" x2="361" y2="196.5" stroke="#ff00ff" stroke-width="1"/>
<line x1="357" y1="239.5" x2="361" y2="239.5" stroke="#ffff00" stroke-width="1"/>
<rect x="342.5" y="275.5" width="11" height="37" fill="none" stroke="#ffff00" stroke-width="1"/>
<line x1="351.5" y1="276" x2="351.5" y2="312" stroke="#ffff00" stroke-width="1"/>
<line x1="344" y1="276.5" x2="351" y2="276.5" stroke="#ff0000" stroke-width="1"/>
<line x1="344" y1="311.5" x2="351" y2="311.5" stroke="#ff0000" stroke-width="1"/>
<line x1="353" y1="281.5" x2="394" y2="281.5" stroke="#00ff00" stroke-width="1"/>
<line x1="353" y1="306.5" x2="397" y2="306.5" stroke="#00ff00" stroke-width="1"/>
<line x1="353" y1="283.5" x2="397" y2="283.5" stroke="#ffffff" stroke-width="1"/>
<line x1="353" y1="289.5" x2="397" y2="289.5" stroke="#ffffff" stroke-width="1"/>
<line x1="353" y1="298.5" x2="397" y2="298.5" stroke="#ffffff" stroke-width="1"/>
<line x1="353" y1="304.5" x2="397" y2="304.5" stroke="#ffffff" stroke-width="1"/>
<line x1="359" y1="283.5" x2="394" y2="304.5" stroke="#ffff00" stroke-width="1"/>
<line x1="394" y1="283.5" x2="359" y2="304.5" stroke="#ffff00" stroke-width="1"/>
<line x1="357" y1="294.5" x2="400" y2="294.5" stroke="#ff0080" stroke-width="1"/>
<line x1="358.5" y1="293.5" x2="358.5" y2="295.5" stroke="#ff0000" stroke-width="1"/>
<line x1="361.5" y1="293.5" x2="361.5" y2="295.5" stroke="#ff0000" stroke-width="1"/>
<line x1="364.5" y1="293.5" x2="364.5" y2="295.5" stroke="#ff0000" stroke-width="1"/>
<line x1="367.5" y1="293.5" x2="367.5" y2="295.5" stroke="#ff0000" stroke-width="1"/>
<line x1="370.5" y1="293.5" x2="370.5" y2="295.5" stroke="#ff0000" stroke-width="1"/>
<line x1="373.5" y1="293.5" x2="373.5" y2="295.5" stroke="#ff0000" stroke-width="1"/>
<line x1="376.5" y1="293.5" x2="376.5" y2="295.5" stroke="#ff0000" stroke-width="1"/>
<line x1="379.5" y1="293.5" x2="379.5" y2="295.5" stroke="#ff0000" stroke-width="1"/>
<line x1="382.5" y1="293.5" x2="382.5" y2="295.5" stroke="#ff0000" stroke-width="1"/>
<line x1="385.5" y1="293.5" x2="385.5" y2="295.5" stroke="#ff0000" stroke-width="1"/>
<line x1="388.5" y1="293.5" x2="388.5" y2="295.5" stroke="#ff0000" stroke-width="1"/>
<line x1="391.5" y1="293.5" x2="391.5" y2="295.5" stroke="#ff0000" stroke-width="1"/>
<line x1="394.5" y1="293.5" x2="394.5" y2="295.5" stroke="#ff0000" stroke-width="1"/>
<line x1="397.5" y1="293.5" x2="397.5" y2="295.5" stroke="#ff0000" stroke-width="1"/>
<line x1="393.5" y1="230" x2="393.5" y2="292.6" stroke="#ffffff" stroke-width="1"/>
<line x1="397.5" y1="268.7" x2="397.5" y2="325" stroke="#ffffff" stroke-width="1"/>
<line x1="395.5" y1="230" x2="395.5" y2="291.7" stroke="#ff0000" stroke-width="1"/>
<line x1="397" y1="268.5" x2="414" y2="268.5" stroke="#ffffff" stroke-width="1"/>
<line x1="440" y1="270.5" x2="515" y2="270.5" stroke="#ffffff" stroke-width="1"/>
<line x1="440" y1="274.5" x2="515" y2="274.5" stroke="#ffffff" stroke-width="1"/>
<polyline points="422.5,282 431,272.5 519,272.5 527,281" fill="none" stroke="#ff0000" stroke-width="1.2"/>
<line x1="447.3" y1="281.5" x2="502.3" y2="281.5" stroke="#00ff00" stroke-width="1"/>
<line x1="447.3" y1="306.5" x2="502.3" y2="306.5" stroke="#00ff00" stroke-width="1"/>
<line x1="447" y1="283.5" x2="502.5" y2="283.5" stroke="#ffffff" stroke-width="1"/>
<line x1="447" y1="296.5" x2="502.5" y2="296.5" stroke="#ffffff" stroke-width="1"/>
<line x1="447" y1="298.5" x2="502.5" y2="298.5" stroke="#ffffff" stroke-width="1"/>
<line x1="447" y1="304.5" x2="502.5" y2="304.5" stroke="#ffffff" stroke-width="1"/>
<line x1="452" y1="289.5" x2="498" y2="289.5" stroke="#ffffff" stroke-width="1"/>
<line x1="447.3" y1="293.5" x2="500" y2="293.5" stroke="#ff0080" stroke-width="1"/>
<polyline points="447.3,281.4 468.6,293.9 447.3,306.4" fill="none" stroke="#ffff00" stroke-width="1.3"/>
<polyline points="498.6,284 487,291.3 471.5,291.3 468.6,293.9 471.5,296.5 487,296.5 502.3,306.4" fill="none" stroke="#ffff00" stroke-width="1.3"/>
<line x1="449.5" y1="270" x2="449.5" y2="306" stroke="#ffffff" stroke-width="1"/>
<line x1="450.5" y1="270" x2="450.5" y2="306" stroke="#ffffff" stroke-width="1"/>
<line x1="452.5" y1="270" x2="452.5" y2="306" stroke="#ffffff" stroke-width="1"/>
<line x1="498.5" y1="270" x2="498.5" y2="310" stroke="#ffffff" stroke-width="1"/>
<line x1="502.5" y1="270" x2="502.5" y2="325" stroke="#ffffff" stroke-width="1"/>
<line x1="500.5" y1="262" x2="500.5" y2="290.5" stroke="#ff0000" stroke-width="1"/>
<line x1="468.5" y1="177" x2="468.5" y2="243.5" stroke="#ffff00" stroke-width="1"/>
<line x1="468.5" y1="269" x2="468.5" y2="309" stroke="#ffff00" stroke-width="1"/>
<line x1="468.5" y1="315" x2="468.5" y2="392" stroke="#ffff00" stroke-width="1"/>
<rect x="376.5" y="159.5" width="208" height="66" fill="none" stroke="#ffffff" stroke-width="1"/>
<line x1="584.5" y1="159" x2="584.5" y2="241" stroke="#ffffff" stroke-width="1"/>
<path d="M585,161.5 L604.5,161.5 L614.5,169.5 L614.5,264.5 L607.5,264.5 L607.5,172.5 L603.5,168.5 L585,168.5" fill="none" stroke="#ffffff" stroke-width="1"/>
<path d="M585,164.5 L605,164.5 L610.5,169.5 L610.5,263.5" fill="none" stroke="#ff0000" stroke-width="1.2"/>
<rect x="584.5" y="218.5" width="8" height="23" fill="none" stroke="#ffffff" stroke-width="1"/>
<line x1="585" y1="220.5" x2="592.6" y2="220.5" stroke="#ffffff" stroke-width="1"/>
<line x1="585" y1="222.5" x2="592.6" y2="222.5" stroke="#ffffff" stroke-width="1"/>
<line x1="585" y1="224.5" x2="592.6" y2="224.5" stroke="#ffffff" stroke-width="1"/>
<line x1="585" y1="226.5" x2="592.6" y2="226.5" stroke="#ffffff" stroke-width="1"/>
<line x1="585" y1="228.5" x2="592.6" y2="228.5" stroke="#ffffff" stroke-width="1"/>
<line x1="585" y1="230.5" x2="592.6" y2="230.5" stroke="#ffffff" stroke-width="1"/>
<line x1="585" y1="232.5" x2="592.6" y2="232.5" stroke="#ffffff" stroke-width="1"/>
<line x1="585" y1="234.5" x2="592.6" y2="234.5" stroke="#ffffff" stroke-width="1"/>
<line x1="585" y1="236.5" x2="592.6" y2="236.5" stroke="#ffffff" stroke-width="1"/>
<line x1="585" y1="238.5" x2="592.6" y2="238.5" stroke="#ffffff" stroke-width="1"/>
<line x1="585" y1="240.5" x2="592.6" y2="240.5" stroke="#ffffff" stroke-width="1"/>
<line x1="579.5" y1="158.6" x2="579.5" y2="241" stroke="#ff0000" stroke-width="1"/>
<rect x="577.5" y="193.5" width="5" height="5" fill="none" stroke="#ff00ff" stroke-width="1"/>
<rect x="577.5" y="219.5" width="5" height="5" fill="none" stroke="#ff00ff" stroke-width="1"/>
<rect x="577.5" y="237.5" width="5" height="5" fill="none" stroke="#ff00ff" stroke-width="1"/>
<line x1="376" y1="162.5" x2="585" y2="162.5" stroke="#ff0000" stroke-width="1"/>
<line x1="415" y1="160.5" x2="585" y2="160.5" stroke="#ffffff" stroke-width="1"/>
<line x1="428" y1="167.5" x2="604" y2="167.5" stroke="#ffffff" stroke-width="1"/>
<line x1="415" y1="164.5" x2="585" y2="164.5" stroke="#ff0000" stroke-width="1"/>
<line x1="376" y1="196.5" x2="589" y2="196.5" stroke="#ff0000" stroke-width="1"/>
<rect x="470" y="219" width="51.6" height="13.4" fill="#ffffff"/>
<line x1="470" y1="222.5" x2="521" y2="222.5" stroke="#ff0000" stroke-width="1" stroke-dasharray="6,2"/>
<line x1="470" y1="226.5" x2="521" y2="226.5" stroke="#ff0000" stroke-width="1" stroke-dasharray="6,2"/>
<line x1="470" y1="230.5" x2="521" y2="230.5" stroke="#ff0000" stroke-width="1" stroke-dasharray="6,2"/>
<rect x="497.8" y="218.5" width="4.1" height="17.5" fill="#ff00ff"/>
<rect x="518" y="219.5" width="3.6" height="14" fill="#ff00ff"/>
<line x1="470" y1="219.5" x2="521.6" y2="219.5" stroke="#ff0000" stroke-width="1"/>
<line x1="471.5" y1="219" x2="471.5" y2="234" stroke="#ff00ff" stroke-width="1"/>
<rect x="472" y="160.5" width="18" height="2" fill="#ff00ff" opacity="0.8"/>
<line x1="470" y1="234.5" x2="521" y2="234.5" stroke="#ff0000" stroke-width="1"/>
<line x1="470" y1="241.5" x2="592.3" y2="241.5" stroke="#ffffff" stroke-width="1"/>
<line x1="523" y1="228.5" x2="572" y2="228.5" stroke="#ff00ff" stroke-width="1"/>
<line x1="523" y1="233.5" x2="572" y2="233.5" stroke="#ff00ff" stroke-width="1"/>
<line x1="523" y1="231.5" x2="572" y2="231.5" stroke="#ff0000" stroke-width="1"/>
<rect x="571.5" y="226" width="11.5" height="9.3" fill="#ff00ff"/>
<rect x="574" y="228" width="3" height="4" fill="#212830"/>
<line x1="579.5" y1="225" x2="579.5" y2="241" stroke="#00ff00" stroke-width="1"/>
<rect x="472.5" y="194.5" width="17" height="6" fill="none" stroke="#ff00ff" stroke-width="1"/>
<rect x="472.5" y="237.5" width="17" height="5" fill="none" stroke="#ff00ff" stroke-width="1"/>
<path d="M462.5,272 L462.5,236 Q462.5,229 470,229" fill="none" stroke="#ffffff" stroke-width="1.1"/>
<path d="M465.5,272 L465.5,237 Q465.5,232 470,232" fill="none" stroke="#ffffff" stroke-width="1.1"/>
<path d="M464,272 L464,236 Q464,230.5 470,230.5" fill="none" stroke="#ff0000" stroke-width="0.8"/>
<line x1="540.5" y1="236" x2="540.5" y2="272" stroke="#ffffff" stroke-width="1"/>
<line x1="543.5" y1="236" x2="543.5" y2="272" stroke="#ffffff" stroke-width="1"/>
<use href="#unit"/><use href="#unit" x="105"/>
<line x1="422.5" y1="128" x2="422.5" y2="440" stroke="#ff0000" stroke-width="1"/>
<line x1="527.5" y1="128" x2="527.5" y2="160" stroke="#ff0000" stroke-width="1"/>
<line x1="527.5" y1="160" x2="527.5" y2="395" stroke="#00ff00" stroke-width="1"/>
<line x1="527.5" y1="395" x2="527.5" y2="424" stroke="#ff0000" stroke-width="1"/>
<line x1="440" y1="392.5" x2="512" y2="392.5" stroke="#ffffff" stroke-width="1"/>
<line x1="440" y1="399.5" x2="512" y2="399.5" stroke="#ffffff" stroke-width="1"/>
<line x1="440" y1="407.5" x2="512" y2="407.5" stroke="#ffffff" stroke-width="1"/>
<line x1="405" y1="403.5" x2="541" y2="403.5" stroke="#ff0000" stroke-width="1"/>
<line x1="541" y1="403.5" x2="573" y2="403.5" stroke="#ffff00" stroke-width="1"/>
<rect x="569.5" y="354" width="1.5" height="4" fill="#ffff00"/>
<line x1="508.5" y1="406.5" x2="508.5" y2="430" stroke="#ff0080" stroke-width="1"/>
<line x1="506" y1="409.5" x2="510" y2="409.5" stroke="#ff0080" stroke-width="1"/>
<line x1="506" y1="419.5" x2="510" y2="419.5" stroke="#ff0080" stroke-width="1"/>
<rect x="503" y="425" width="4" height="2" fill="#ff00ff"/>
<rect x="503" y="429" width="1" height="2" fill="#ff00ff"/>
<rect x="450.5" y="383.5" width="49" height="29" fill="none" stroke="#ff0080" stroke-width="1"/>
<circle cx="450.7" cy="371.7" r="2.8" fill="none" stroke="#ffffff" stroke-width="1.35"/>
<circle cx="499.2" cy="371.7" r="2.8" fill="none" stroke="#ffffff" stroke-width="1.35"/>
<line x1="450.5" y1="375" x2="450.5" y2="384" stroke="#ffffff" stroke-width="1"/>
<line x1="499.5" y1="375" x2="499.5" y2="384" stroke="#ffffff" stroke-width="1"/>
<line x1="450.5" y1="383.8" x2="450.5" y2="410.5" stroke="#ff0080" stroke-width="1"/>
<line x1="499.5" y1="383.8" x2="499.5" y2="410.5" stroke="#ff0080" stroke-width="1"/>
<rect x="449.5" y="410.5" width="51" height="34" fill="none" stroke="#ffffff" stroke-width="1"/>
<rect x="462.5" y="410.5" width="28" height="18" fill="none" stroke="#ffffff" stroke-width="1"/>
<rect x="462.3" y="410.5" width="28.2" height="8.9" fill="#ffffff"/>
<rect x="464" y="415" width="4" height="4" fill="#212830"/>
<rect x="482" y="414" width="6" height="4" fill="#212830"/>
<line x1="454" y1="413.5" x2="470" y2="413.5" stroke="#ff0000" stroke-width="1"/>
<line x1="478" y1="413.5" x2="486" y2="413.5" stroke="#212830" stroke-width="1"/>
<line x1="460" y1="420.5" x2="491" y2="420.5" stroke="#ff0000" stroke-width="1"/>
<line x1="451" y1="412" x2="462.3" y2="422" stroke="#00ff00" stroke-width="1"/>
<line x1="499" y1="412" x2="490.5" y2="421" stroke="#00ff00" stroke-width="1"/>
<line x1="451" y1="443" x2="466.5" y2="428.3" stroke="#00ff00" stroke-width="1"/>
<line x1="499" y1="443" x2="486.3" y2="431.4" stroke="#00ff00" stroke-width="1"/>
<line x1="471.7" y1="431.5" x2="486.3" y2="431.5" stroke="#00ff00" stroke-width="1"/>
<line x1="470" y1="424.5" x2="486.9" y2="424.5" stroke="#00ff00" stroke-width="1"/>
<line x1="475" y1="432" x2="486" y2="440" stroke="#00ff00" stroke-width="1"/>
<line x1="483" y1="439.5" x2="492" y2="439.5" stroke="#ffffff" stroke-width="1"/>
<circle cx="466.5" cy="425" r="2.5" fill="none" stroke="#ffffff" stroke-width="1.1"/>
<rect x="449.5" y="410.5" width="3" height="3" fill="none" stroke="#ff00ff" stroke-width="1"/>
<rect x="497.5" y="410.5" width="3" height="3" fill="none" stroke="#ff00ff" stroke-width="1"/>
<rect x="449.5" y="441.5" width="3" height="3" fill="none" stroke="#ff00ff" stroke-width="1"/>
<rect x="497.5" y="441.5" width="3" height="3" fill="none" stroke="#ff00ff" stroke-width="1"/>
<line x1="496" y1="415.5" x2="499" y2="415.5" stroke="#ff0000" stroke-width="1"/>
<line x1="496" y1="418.5" x2="499" y2="418.5" stroke="#ff0000" stroke-width="1"/>
<line x1="496.5" y1="415" x2="496.5" y2="418" stroke="#ff0000" stroke-width="1"/>
<line x1="454.4" y1="413.6" x2="440" y2="445" stroke="#ffffff" stroke-width="3.2"/>
<line x1="454.4" y1="413.6" x2="440" y2="445" stroke="#ff0000" stroke-width="1"/>
<line x1="626.3" y1="107.5" x2="672.4" y2="107.5" stroke="#ffff00" stroke-width="1"/>
<line x1="626.5" y1="105" x2="626.5" y2="126" stroke="#ffff00" stroke-width="1"/>
<line x1="672.5" y1="105" x2="672.5" y2="126" stroke="#ffff00" stroke-width="1"/>
<rect x="626.2" y="125" width="2.7" height="128.7" fill="#ffffff"/>
<rect x="671.3" y="125" width="2.7" height="128.7" fill="#ffffff"/>
<line x1="626.5" y1="225" x2="626.5" y2="252" stroke="#ff0000" stroke-width="1"/>
<line x1="626.2" y1="252.5" x2="674" y2="252.5" stroke="#ff0000" stroke-width="1"/>
<line x1="626.2" y1="253.5" x2="674" y2="253.5" stroke="#ffffff" stroke-width="1"/>
<rect x="632.5" y="131.5" width="34" height="114" fill="none" stroke="#ffffff" stroke-width="1"/>
<line x1="628" y1="126.5" x2="673" y2="126.5" stroke="#ff0000" stroke-width="1.5"/>
<line x1="633.5" y1="236" x2="633.5" y2="246.5" stroke="#00ff00" stroke-width="1"/>
<line x1="632.5" y1="133" x2="632.5" y2="236" stroke="#ffffff" stroke-width="1"/>
<line x1="636.5" y1="133" x2="636.5" y2="236" stroke="#ffffff" stroke-width="1"/>
<line x1="662.5" y1="133" x2="662.5" y2="236" stroke="#ffffff" stroke-width="1"/>
<line x1="666.5" y1="133" x2="666.5" y2="236" stroke="#ffffff" stroke-width="1"/>
<line x1="632.5" y1="134.5" x2="636" y2="134.5" stroke="#ffffff" stroke-width="1"/>
<line x1="662.5" y1="134.5" x2="666" y2="134.5" stroke="#ffffff" stroke-width="1"/>
<line x1="632.5" y1="137.5" x2="636" y2="137.5" stroke="#ffffff" stroke-width="1"/>
<line x1="662.5" y1="137.5" x2="666" y2="137.5" stroke="#ffffff" stroke-width="1"/>
<line x1="632.5" y1="140.5" x2="636" y2="140.5" stroke="#ffffff" stroke-width="1"/>
<line x1="662.5" y1="140.5" x2="666" y2="140.5" stroke="#ffffff" stroke-width="1"/>
<line x1="632.5" y1="143.5" x2="636" y2="143.5" stroke="#ffffff" stroke-width="1"/>
<line x1="662.5" y1="143.5" x2="666" y2="143.5" stroke="#ffffff" stroke-width="1"/>
<line x1="632.5" y1="146.5" x2="636" y2="146.5" stroke="#ffffff" stroke-width="1"/>
<line x1="662.5" y1="146.5" x2="666" y2="146.5" stroke="#ffffff" stroke-width="1"/>
<line x1="632.5" y1="149.5" x2="636" y2="149.5" stroke="#ffffff" stroke-width="1"/>
<line x1="662.5" y1="149.5" x2="666" y2="149.5" stroke="#ffffff" stroke-width="1"/>
<line x1="632.5" y1="152.5" x2="636" y2="152.5" stroke="#ffffff" stroke-width="1"/>
<line x1="662.5" y1="152.5" x2="666" y2="152.5" stroke="#ffffff" stroke-width="1"/>
<line x1="632.5" y1="155.5" x2="636" y2="155.5" stroke="#ffffff" stroke-width="1"/>
<line x1="662.5" y1="155.5" x2="666" y2="155.5" stroke="#ffffff" stroke-width="1"/>
<line x1="632.5" y1="158.5" x2="636" y2="158.5" stroke="#ffffff" stroke-width="1"/>
<line x1="662.5" y1="158.5" x2="666" y2="158.5" stroke="#ffffff" stroke-width="1"/>
<line x1="632.5" y1="161.5" x2="636" y2="161.5" stroke="#ffffff" stroke-width="1"/>
<line x1="662.5" y1="161.5" x2="666" y2="161.5" stroke="#ffffff" stroke-width="1"/>
<line x1="632.5" y1="164.5" x2="636" y2="164.5" stroke="#ffffff" stroke-width="1"/>
<line x1="662.5" y1="164.5" x2="666" y2="164.5" stroke="#ffffff" stroke-width="1"/>
<line x1="632.5" y1="167.5" x2="636" y2="167.5" stroke="#ffffff" stroke-width="1"/>
<line x1="662.5" y1="167.5" x2="666" y2="167.5" stroke="#ffffff" stroke-width="1"/>
<line x1="632.5" y1="170.5" x2="636" y2="170.5" stroke="#ffffff" stroke-width="1"/>
<line x1="662.5" y1="170.5" x2="666" y2="170.5" stroke="#ffffff" stroke-width="1"/>
<line x1="632.5" y1="173.5" x2="636" y2="173.5" stroke="#ffffff" stroke-width="1"/>
<line x1="662.5" y1="173.5" x2="666" y2="173.5" stroke="#ffffff" stroke-width="1"/>
<line x1="632.5" y1="176.5" x2="636" y2="176.5" stroke="#ffffff" stroke-width="1"/>
<line x1="662.5" y1="176.5" x2="666" y2="176.5" stroke="#ffffff" stroke-width="1"/>
<line x1="632.5" y1="179.5" x2="636" y2="179.5" stroke="#ffffff" stroke-width="1"/>
<line x1="662.5" y1="179.5" x2="666" y2="179.5" stroke="#ffffff" stroke-width="1"/>
<line x1="632.5" y1="182.5" x2="636" y2="182.5" stroke="#ffffff" stroke-width="1"/>
<line x1="662.5" y1="182.5" x2="666" y2="182.5" stroke="#ffffff" stroke-width="1"/>
<line x1="632.5" y1="185.5" x2="636" y2="185.5" stroke="#ffffff" stroke-width="1"/>
<line x1="662.5" y1="185.5" x2="666" y2="185.5" stroke="#ffffff" stroke-width="1"/>
<line x1="632.5" y1="188.5" x2="636" y2="188.5" stroke="#ffffff" stroke-width="1"/>
<line x1="662.5" y1="188.5" x2="666" y2="188.5" stroke="#ffffff" stroke-width="1"/>
<line x1="632.5" y1="191.5" x2="636" y2="191.5" stroke="#ffffff" stroke-width="1"/>
<line x1="662.5" y1="191.5" x2="666" y2="191.5" stroke="#ffffff" stroke-width="1"/>
<line x1="632.5" y1="194.5" x2="636" y2="194.5" stroke="#ffffff" stroke-width="1"/>
<line x1="662.5" y1="194.5" x2="666" y2="194.5" stroke="#ffffff" stroke-width="1"/>
<line x1="632.5" y1="197.5" x2="636" y2="197.5" stroke="#ffffff" stroke-width="1"/>
<line x1="662.5" y1="197.5" x2="666" y2="197.5" stroke="#ffffff" stroke-width="1"/>
<line x1="632.5" y1="200.5" x2="636" y2="200.5" stroke="#ffffff" stroke-width="1"/>
<line x1="662.5" y1="200.5" x2="666" y2="200.5" stroke="#ffffff" stroke-width="1"/>
<line x1="632.5" y1="203.5" x2="636" y2="203.5" stroke="#ffffff" stroke-width="1"/>
<line x1="662.5" y1="203.5" x2="666" y2="203.5" stroke="#ffffff" stroke-width="1"/>
<line x1="632.5" y1="206.5" x2="636" y2="206.5" stroke="#ffffff" stroke-width="1"/>
<line x1="662.5" y1="206.5" x2="666" y2="206.5" stroke="#ffffff" stroke-width="1"/>
<line x1="632.5" y1="209.5" x2="636" y2="209.5" stroke="#ffffff" stroke-width="1"/>
<line x1="662.5" y1="209.5" x2="666" y2="209.5" stroke="#ffffff" stroke-width="1"/>
<line x1="632.5" y1="212.5" x2="636" y2="212.5" stroke="#ffffff" stroke-width="1"/>
<line x1="662.5" y1="212.5" x2="666" y2="212.5" stroke="#ffffff" stroke-width="1"/>
<line x1="632.5" y1="215.5" x2="636" y2="215.5" stroke="#ffffff" stroke-width="1"/>
<line x1="662.5" y1="215.5" x2="666" y2="215.5" stroke="#ffffff" stroke-width="1"/>
<line x1="632.5" y1="218.5" x2="636" y2="218.5" stroke="#ffffff" stroke-width="1"/>
<line x1="662.5" y1="218.5" x2="666" y2="218.5" stroke="#ffffff" stroke-width="1"/>
<line x1="632.5" y1="221.5" x2="636" y2="221.5" stroke="#ffffff" stroke-width="1"/>
<line x1="662.5" y1="221.5" x2="666" y2="221.5" stroke="#ffffff" stroke-width="1"/>
<line x1="632.5" y1="224.5" x2="636" y2="224.5" stroke="#ffffff" stroke-width="1"/>
<line x1="662.5" y1="224.5" x2="666" y2="224.5" stroke="#ffffff" stroke-width="1"/>
<line x1="632.5" y1="227.5" x2="636" y2="227.5" stroke="#ffffff" stroke-width="1"/>
<line x1="662.5" y1="227.5" x2="666" y2="227.5" stroke="#ffffff" stroke-width="1"/>
<line x1="632.5" y1="230.5" x2="636" y2="230.5" stroke="#ffffff" stroke-width="1"/>
<line x1="662.5" y1="230.5" x2="666" y2="230.5" stroke="#ffffff" stroke-width="1"/>
<line x1="632.5" y1="233.5" x2="636" y2="233.5" stroke="#ffffff" stroke-width="1"/>
<line x1="662.5" y1="233.5" x2="666" y2="233.5" stroke="#ffffff" stroke-width="1"/>
<line x1="632" y1="179.5" x2="666" y2="179.5" stroke="#ffffff" stroke-width="1"/>
<line x1="632" y1="185.5" x2="666" y2="185.5" stroke="#ffffff" stroke-width="1"/>
<line x1="632" y1="236.5" x2="666" y2="236.5" stroke="#ffffff" stroke-width="1"/>
<path d="M655,126 L659,119 L671,119 L671,126" fill="none" stroke="#ffffff" stroke-width="1"/>
<line x1="660.5" y1="120" x2="660.5" y2="126" stroke="#ffffff" stroke-width="1"/>
<line x1="662.5" y1="120" x2="662.5" y2="126" stroke="#ffffff" stroke-width="1"/>
<line x1="664.5" y1="120" x2="664.5" y2="126" stroke="#ffffff" stroke-width="1"/>
<line x1="666.5" y1="120" x2="666.5" y2="126" stroke="#ffffff" stroke-width="1"/>
<line x1="668.5" y1="120" x2="668.5" y2="126" stroke="#ffffff" stroke-width="1"/>
<line x1="670.5" y1="120" x2="670.5" y2="126" stroke="#ffffff" stroke-width="1"/>
<line x1="644.5" y1="196" x2="644.5" y2="205" stroke="#00ff00" stroke-width="1"/>
<line x1="641" y1="200" x2="644" y2="205" stroke="#00ff00" stroke-width="1"/>
<line x1="655.5" y1="194" x2="655.5" y2="203" stroke="#00ff00" stroke-width="1"/>
<line x1="650" y1="239.5" x2="655" y2="239.5" stroke="#ffff00" stroke-width="1"/>
<rect x="651" y="241" width="1.5" height="1" fill="#ffff00"/>
<line x1="627.5" y1="253.5" x2="627.5" y2="273" stroke="#00ff00" stroke-width="1"/>
<line x1="627.5" y1="273" x2="627.5" y2="290" stroke="#ff00ff" stroke-width="1"/>
<line x1="649.5" y1="253.5" x2="649.5" y2="283" stroke="#00ff00" stroke-width="1"/>
<line x1="672.5" y1="253.5" x2="672.5" y2="273" stroke="#ff0000" stroke-width="1"/>
<line x1="672.5" y1="273" x2="672.5" y2="290" stroke="#ff00ff" stroke-width="1"/>
<line x1="627" y1="282.5" x2="672.6" y2="282.5" stroke="#00ff00" stroke-width="1"/>
<line x1="627" y1="283.5" x2="672.6" y2="283.5" stroke="#ff0000" stroke-width="1"/>
<path d="M642,282.3 Q644,279.5 646,282.3 M653,282.3 Q655,279.5 657,282.3" fill="none" stroke="#00ff00" stroke-width="1"/>
<line x1="627" y1="288.5" x2="672.6" y2="288.5" stroke="#ff00ff" stroke-width="1"/>
<line x1="649.5" y1="284" x2="649.5" y2="290" stroke="#ff00ff" stroke-width="1"/>
<rect x="640.5" y="291.5" width="1.5" height="1.5" fill="#ff00ff"/>
<rect x="663" y="291.5" width="1.5" height="1.5" fill="#ff00ff"/>
<line x1="673.5" y1="252.5" x2="697.6" y2="252.5" stroke="#ffff00" stroke-width="1"/>
<line x1="673.5" y1="283.5" x2="697.6" y2="283.5" stroke="#ffff00" stroke-width="1"/>
<rect x="692" y="268.5" width="2.5" height="1.5" fill="#ffff00"/>
<rect x="708" y="297" width="2" height="1" fill="#ffff00"/>
<line x1="696.5" y1="109.7" x2="696.5" y2="282.7" stroke="#ffff00" stroke-width="1"/>
<line x1="696" y1="109.5" x2="713" y2="109.5" stroke="#ffff00" stroke-width="1"/>
<line x1="673" y1="126.5" x2="696" y2="126.5" stroke="#ffff00" stroke-width="1"/>
<line x1="713.5" y1="110" x2="713.5" y2="208.6" stroke="#00ff00" stroke-width="1"/>
<line x1="713.5" y1="208.6" x2="713.5" y2="387" stroke="#ffff00" stroke-width="1"/>
<line x1="682.4" y1="386.5" x2="715.7" y2="386.5" stroke="#ffff00" stroke-width="1"/>
<line x1="613.4" y1="386.5" x2="682.4" y2="386.5" stroke="#00ff00" stroke-width="1"/>
<circle cx="693.5" cy="386.8" r="2.8" fill="none" stroke="#ffffff" stroke-width="1.35"/>
<circle cx="720.7" cy="109" r="2.8" fill="none" stroke="#ffffff" stroke-width="1.35"/>
<line x1="709" y1="109.5" x2="717" y2="109.5" stroke="#00ff00" stroke-width="1"/>
<circle cx="720.7" cy="155.3" r="2.8" fill="none" stroke="#ffffff" stroke-width="1.35"/>
<line x1="709" y1="155.5" x2="717" y2="155.5" stroke="#00ff00" stroke-width="1"/>
<circle cx="720.7" cy="180.8" r="2.8" fill="none" stroke="#ffffff" stroke-width="1.35"/>
<line x1="709" y1="180.5" x2="717" y2="180.5" stroke="#00ff00" stroke-width="1"/>
<circle cx="720.7" cy="209.8" r="2.8" fill="none" stroke="#ffffff" stroke-width="1.35"/>
<line x1="709" y1="209.5" x2="717" y2="209.5" stroke="#00ff00" stroke-width="1"/>
<line x1="613.8" y1="386.8" x2="614" y2="655" stroke="#00ff00" stroke-width="1"/>
<line x1="614.5" y1="418.8" x2="614.5" y2="443.5" stroke="#ff00ff" stroke-width="1"/>
<circle cx="620.7" cy="418.8" r="2.7" fill="none" stroke="#ffffff" stroke-width="1.35"/>
<line x1="611" y1="418.5" x2="617.5" y2="418.5" stroke="#00ff00" stroke-width="1"/>
<circle cx="620.7" cy="443.5" r="2.7" fill="none" stroke="#ffffff" stroke-width="1.35"/>
<line x1="611" y1="443.5" x2="617.5" y2="443.5" stroke="#00ff00" stroke-width="1"/>
<circle cx="620.7" cy="456" r="2.7" fill="none" stroke="#ffffff" stroke-width="1.35"/>
<line x1="611" y1="456.5" x2="617.5" y2="456.5" stroke="#00ff00" stroke-width="1"/>
<circle cx="620.7" cy="484.2" r="2.7" fill="none" stroke="#ffffff" stroke-width="1.35"/>
<line x1="611" y1="484.5" x2="617.5" y2="484.5" stroke="#00ff00" stroke-width="1"/>
<circle cx="620.7" cy="510.8" r="2.7" fill="none" stroke="#ffffff" stroke-width="1.35"/>
<line x1="611" y1="510.5" x2="617.5" y2="510.5" stroke="#00ff00" stroke-width="1"/>
<circle cx="620.7" cy="579.8" r="2.7" fill="none" stroke="#ffffff" stroke-width="1.35"/>
<line x1="611" y1="579.5" x2="617.5" y2="579.5" stroke="#00ff00" stroke-width="1"/>
<circle cx="620.7" cy="618" r="2.7" fill="none" stroke="#ffffff" stroke-width="1.35"/>
<line x1="611" y1="618.5" x2="617.5" y2="618.5" stroke="#00ff00" stroke-width="1"/>
<circle cx="620.7" cy="655.6" r="2.7" fill="none" stroke="#ffffff" stroke-width="1.35"/>
<line x1="611" y1="655.5" x2="617.5" y2="655.5" stroke="#00ff00" stroke-width="1"/>
<line x1="572.5" y1="265.6" x2="572.5" y2="403" stroke="#ffff00" stroke-width="1"/>
<line x1="540" y1="265.5" x2="572.9" y2="265.5" stroke="#ffff00" stroke-width="1"/>
<line x1="572.5" y1="277.8" x2="572.5" y2="310" stroke="#00ff00" stroke-width="1"/>
<circle cx="576.7" cy="277.8" r="2.8" fill="none" stroke="#ffffff" stroke-width="1.35"/>
<circle cx="576.7" cy="310" r="2.8" fill="none" stroke="#ffffff" stroke-width="1.35"/>
<line x1="540" y1="277.5" x2="572.9" y2="277.5" stroke="#ff0000" stroke-width="1"/>
<line x1="540" y1="310.5" x2="572.9" y2="310.5" stroke="#ff0000" stroke-width="1"/>
<line x1="564.5" y1="277.8" x2="564.5" y2="310" stroke="#ff00ff" stroke-width="1"/>
<line x1="325.4" y1="475.5" x2="527.7" y2="475.5" stroke="#00ff00" stroke-width="1"/>
<line x1="369" y1="471.5" x2="371" y2="471.5" stroke="#00ff00" stroke-width="1"/>
<rect x="373" y="472" width="1" height="1" fill="#00ff00"/>
<line x1="422.5" y1="446" x2="422.5" y2="477.7" stroke="#00ff00" stroke-width="1"/>
<line x1="527.5" y1="424" x2="527.5" y2="465.7" stroke="#ff0080" stroke-width="1"/>
<line x1="527.5" y1="465.7" x2="527.5" y2="477.7" stroke="#00ff00" stroke-width="1"/>
<rect x="425.5" y="454.5" width="27" height="58" fill="none" stroke="#ffffff" stroke-width="1" rx="2"/>
<rect x="424.5" y="453.5" width="4" height="4" fill="none" stroke="#ff00ff" stroke-width="1"/>
<rect x="449.5" y="453.5" width="4" height="4" fill="none" stroke="#ff00ff" stroke-width="1"/>
<rect x="424.5" y="482.5" width="4" height="4" fill="none" stroke="#ff00ff" stroke-width="1"/>
<rect x="449.5" y="482.5" width="4" height="4" fill="none" stroke="#ff00ff" stroke-width="1"/>
<rect x="424.5" y="508.5" width="4" height="4" fill="none" stroke="#ff00ff" stroke-width="1"/>
<rect x="449.5" y="508.5" width="4" height="4" fill="none" stroke="#ff00ff" stroke-width="1"/>
<rect x="432" y="468.3" width="14.6" height="32.4" fill="#ffffff"/>
<rect x="435" y="471" width="2.6" height="5" fill="#212830"/>
<rect x="435" y="478" width="2.6" height="5" fill="#212830"/>
<rect x="435" y="486" width="2.6" height="5" fill="#212830"/>
<rect x="435" y="493" width="2.6" height="5" fill="#212830"/>
<rect x="440.5" y="471" width="3" height="5" fill="#212830"/>
<rect x="440.5" y="478" width="3" height="5" fill="#212830"/>
<rect x="440.5" y="486" width="3" height="5" fill="#212830"/>
<rect x="440.5" y="493" width="3" height="5" fill="#212830"/>
<line x1="434.5" y1="454.7" x2="434.5" y2="499.7" stroke="#ff0000" stroke-width="1"/>
<line x1="439.5" y1="468.3" x2="439.5" y2="500.7" stroke="#ff0000" stroke-width="1"/>
<line x1="431" y1="484.5" x2="446.6" y2="484.5" stroke="#ff0000" stroke-width="1"/>
<line x1="432" y1="468.5" x2="446" y2="468.5" stroke="#ff0000" stroke-width="1"/>
<line x1="438" y1="464.5" x2="448" y2="464.5" stroke="#ffffff" stroke-width="1"/>
<path d="M439,464.6 L440.5,467 L442,464.6" fill="none" stroke="#ffffff" stroke-width="1"/>
<line x1="439.5" y1="458" x2="441" y2="461" stroke="#00ff00" stroke-width="1"/>
<circle cx="420.5" cy="496.5" r="4.2" fill="#ffffff" stroke="#ffffff" stroke-width="1"/>
<line x1="415" y1="496.5" x2="432.5" y2="496.5" stroke="#ff0000" stroke-width="1"/>
<line x1="420.5" y1="491.5" x2="420.5" y2="501.5" stroke="#ff0000" stroke-width="1"/>
<path d="M433,501 Q432,509 440,509 L448,507" fill="none" stroke="#ffffff" stroke-width="1.3"/>
<line x1="436" y1="503" x2="441" y2="507" stroke="#ff0000" stroke-width="1.8"/>
<line x1="444" y1="505" x2="450" y2="506" stroke="#ff0000" stroke-width="1.8"/>
<rect x="443" y="502" width="2" height="2" fill="#ffff00"/>
<line x1="427.5" y1="512" x2="427.5" y2="669.8" stroke="#ff0000" stroke-width="1"/>
<line x1="434" y1="454.7" x2="441.4" y2="440" stroke="#ff0000" stroke-width="1"/>
<line x1="436" y1="455" x2="443.5" y2="440" stroke="#ffffff" stroke-width="1"/>
<line x1="422.5" y1="440" x2="422.5" y2="446.3" stroke="#ff0000" stroke-width="1"/>
<line x1="417" y1="446.5" x2="419" y2="446.5" stroke="#ff0080" stroke-width="1"/>
<line x1="418.5" y1="446" x2="418.5" y2="449" stroke="#ff0080" stroke-width="1"/>
<rect x="416.5" y="451" width="2.5" height="2" fill="#ff0080" opacity="0.8"/>
<rect x="418" y="460" width="1" height="1" fill="#ff0080"/>
<rect x="418" y="470" width="1" height="2" fill="#ff0080"/>
<line x1="459.5" y1="444.5" x2="459.5" y2="576" stroke="#ffffff" stroke-width="1"/>
<line x1="466.5" y1="444.5" x2="466.5" y2="576" stroke="#ffffff" stroke-width="1"/>
<line x1="471.5" y1="444.5" x2="471.5" y2="576" stroke="#ffffff" stroke-width="1"/>
<line x1="490.5" y1="444.5" x2="490.5" y2="576" stroke="#ffffff" stroke-width="1"/>
<line x1="468.5" y1="405" x2="468.5" y2="576" stroke="#ff0000" stroke-width="1"/>
<line x1="450.6" y1="444.5" x2="499.5" y2="444.5" stroke="#ffffff" stroke-width="1"/>
<line x1="469" y1="450.5" x2="486.9" y2="450.5" stroke="#ffff00" stroke-width="1"/>
<line x1="460" y1="533.5" x2="474" y2="533.5" stroke="#00ff00" stroke-width="1"/>
<line x1="486" y1="533.5" x2="491" y2="533.5" stroke="#00ff00" stroke-width="1"/>
<path d="M460,541.0 L465,538.0 L470,538.0 L490,540.0" fill="none" stroke="#00ff00" stroke-width="1.1"/>
<path d="M460,554.0 L465,551.0 L470,551.0 L490,553.0" fill="none" stroke="#00ff00" stroke-width="1.1"/>
<path d="M460,567.5 L465,564.5 L470,564.5 L490,566.5" fill="none" stroke="#00ff00" stroke-width="1.1"/>
<line x1="511" y1="536.5" x2="519" y2="536.5" stroke="#ffffff" stroke-width="1"/>
<path d="M512,536 L514,539 L516,536" fill="none" stroke="#ffffff" stroke-width="1"/>
<rect x="449.5" y="576.5" width="52" height="82" fill="none" stroke="#ffffff" stroke-width="1.5"/>
<line x1="451.5" y1="578.8" x2="451.5" y2="656.6" stroke="#ff0000" stroke-width="1"/>
<line x1="498.5" y1="578.8" x2="498.5" y2="656.6" stroke="#ff0000" stroke-width="1"/>
<line x1="451.5" y1="579.5" x2="473" y2="579.5" stroke="#ff0000" stroke-width="1"/>
<line x1="485" y1="579.5" x2="498.3" y2="579.5" stroke="#ff0000" stroke-width="1"/>
<line x1="451.5" y1="656.5" x2="473" y2="656.5" stroke="#ff0000" stroke-width="1"/>
<line x1="485" y1="656.5" x2="498.3" y2="656.5" stroke="#ff0000" stroke-width="1"/>
<line x1="452" y1="617.5" x2="473" y2="617.5" stroke="#ff0000" stroke-width="1"/>
<line x1="485" y1="617.5" x2="498" y2="617.5" stroke="#ff0000" stroke-width="1"/>
<line x1="450" y1="616.5" x2="500" y2="616.5" stroke="#ffffff" stroke-width="1"/>
<line x1="450" y1="619.5" x2="500" y2="619.5" stroke="#ffffff" stroke-width="1"/>
<rect x="465.5" y="593.5" width="6" height="7" fill="none" stroke="#ffffff" stroke-width="1"/>
<rect x="465.5" y="636.5" width="6" height="6" fill="none" stroke="#ffffff" stroke-width="1"/>
<line x1="452" y1="580" x2="465" y2="594" stroke="#ffffff" stroke-width="1"/>
<line x1="498" y1="580" x2="471" y2="594" stroke="#ffffff" stroke-width="1"/>
<line x1="452" y1="615" x2="465" y2="600" stroke="#ffffff" stroke-width="1"/>
<line x1="498" y1="615" x2="471" y2="600" stroke="#ffffff" stroke-width="1"/>
<line x1="452" y1="621" x2="465" y2="636" stroke="#ffffff" stroke-width="1"/>
<line x1="498" y1="621" x2="471" y2="636" stroke="#ffffff" stroke-width="1"/>
<line x1="452" y1="655" x2="465" y2="642" stroke="#ffffff" stroke-width="1"/>
<line x1="498" y1="655" x2="471" y2="642" stroke="#ffffff" stroke-width="1"/>
<line x1="468.5" y1="560" x2="468.5" y2="663" stroke="#ff0000" stroke-width="1"/>
<line x1="437.4" y1="596.5" x2="492" y2="596.5" stroke="#00ff00" stroke-width="1"/>
<line x1="437.4" y1="639.5" x2="492" y2="639.5" stroke="#00ff00" stroke-width="1"/>
<line x1="492" y1="596.5" x2="500" y2="596.5" stroke="#ff0000" stroke-width="1"/>
<line x1="492" y1="639.5" x2="500" y2="639.5" stroke="#ff0000" stroke-width="1"/>
<line x1="439.5" y1="596.5" x2="439.5" y2="639.4" stroke="#00ff00" stroke-width="1"/>
<rect x="449.5" y="615.5" width="4" height="3" fill="none" stroke="#ff00ff" stroke-width="1"/>
<rect x="496.5" y="615.5" width="4" height="3" fill="none" stroke="#ff00ff" stroke-width="1"/>
<rect x="449.5" y="654.5" width="4" height="3" fill="none" stroke="#ff00ff" stroke-width="1"/>
<rect x="496.5" y="654.5" width="4" height="3" fill="none" stroke="#ff00ff" stroke-width="1"/>
<rect x="501.5" y="586.5" width="66" height="60" fill="none" stroke="#ffffff" stroke-width="1"/>
<line x1="543.5" y1="586.4" x2="543.5" y2="646.5" stroke="#ffffff" stroke-width="1"/>
<line x1="512" y1="612.5" x2="521" y2="612.5" stroke="#ffffff" stroke-width="1"/>
<path d="M513,612.5 L515,615 L517,612.5" fill="none" stroke="#ffffff" stroke-width="1"/>
<line x1="537" y1="613" x2="542" y2="614" stroke="#ff00ff" stroke-width="1"/>
<line x1="427.3" y1="670.5" x2="451.5" y2="670.5" stroke="#ff0080" stroke-width="1"/>
<line x1="451.5" y1="670.5" x2="498.3" y2="670.5" stroke="#00ff00" stroke-width="1"/>
<line x1="427.5" y1="665" x2="427.5" y2="673" stroke="#ff0080" stroke-width="1"/>
<line x1="451.5" y1="665" x2="451.5" y2="673" stroke="#ff0080" stroke-width="1"/>
<line x1="498.5" y1="665" x2="498.5" y2="673" stroke="#00ff00" stroke-width="1"/>
<circle cx="427.3" cy="676.9" r="2.8" fill="none" stroke="#ffffff" stroke-width="1.35"/>
<circle cx="451.5" cy="676.9" r="2.8" fill="none" stroke="#ffffff" stroke-width="1.35"/>
<circle cx="498.3" cy="676.9" r="2.8" fill="none" stroke="#ffffff" stroke-width="1.35"/>
</svg></body></html>
